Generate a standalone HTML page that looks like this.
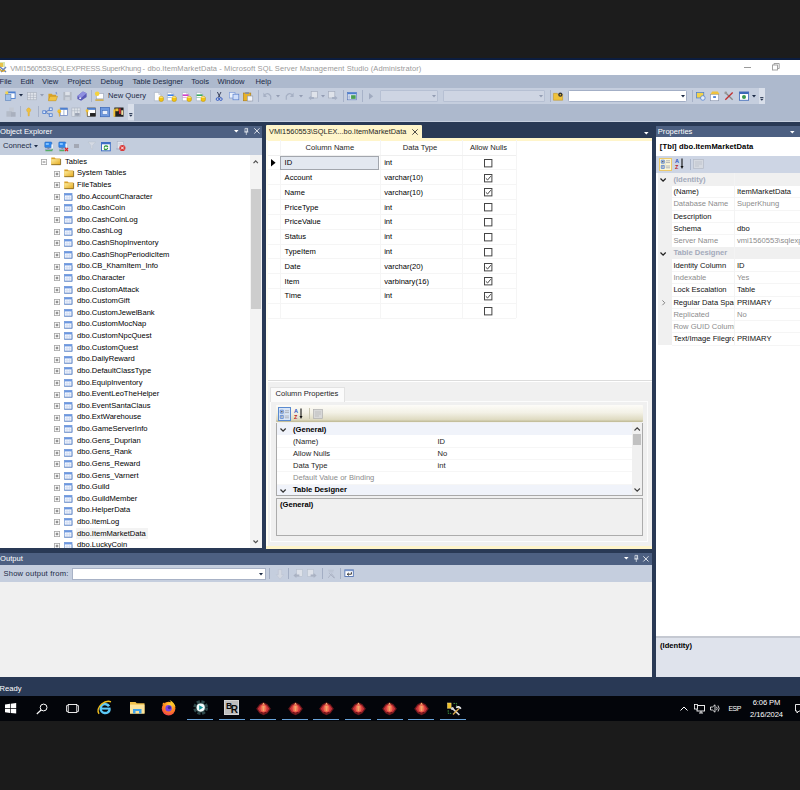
<!DOCTYPE html>
<html><head><meta charset="utf-8"><title>SSMS</title>
<style>
html,body{margin:0;padding:0;background:#1c1c1c;}
body{width:800px;height:790px;position:relative;overflow:hidden;font-family:"Liberation Sans",sans-serif;font-size:7.6px;}
div,span.t,svg{position:absolute;box-sizing:border-box;}
span.t{white-space:nowrap;display:block;}
svg{overflow:visible;}
</style></head><body>
<div style="left:0px;top:0px;width:800px;height:58px;background:#1c1c1c;"></div>
<div style="left:0px;top:58px;width:800px;height:2px;background:#0c1d3f;"></div>
<div style="left:0px;top:60px;width:800px;height:15px;background:#ffffff;"></div>
<div style="left:0px;top:75px;width:800px;height:46.4px;background:#adb9cd;"></div>
<div style="left:0px;top:121.4px;width:800px;height:555.6px;background:#293955;"></div>
<div style="left:0px;top:677px;width:800px;height:19px;background:#293955;"></div>
<div style="left:0px;top:696px;width:800px;height:25.4px;background:#03050a;"></div>
<div style="left:0px;top:721.2px;width:800px;height:69px;background:#1b1b1b;"></div>
<svg width="0" height="0" style="left:0;top:0"><defs><linearGradient id="fg" x1="0" y1="0" x2="1" y2="1"><stop offset="0" stop-color="#fdeea0"/><stop offset="1" stop-color="#e5a81c"/></linearGradient><radialGradient id="ffg" cx="0.6" cy="0.25" r="0.9"><stop offset="0" stop-color="#ffe23a"/><stop offset="0.45" stop-color="#ff8a1e"/><stop offset="1" stop-color="#ee2a5a"/></radialGradient></defs></svg>
<svg style="left:0px;top:61px;" width="8" height="13" viewBox="0 0 8 13"><rect x="0" y="1" width="5" height="5" fill="#d9e6b0"/><rect x="0" y="2" width="3" height="4" fill="#e8c24a"/>
<path d="M0 6 L6 11 M6 6 L1 11" stroke="#6b86b8" stroke-width="1.6" fill="none"/><path d="M0 8 Q2 12 5 9" stroke="#d9a520" stroke-width="1.2" fill="none"/></svg>
<span class="t" style="top:62.6px;color:#9a9a9a;font-size:7.5px;line-height:12px;left:10.3px;letter-spacing:-0.26px;">VMI1560553\SQLEXPRESS.SuperKhung</span>
<span class="t" style="top:62.6px;color:#9a9a9a;font-size:7.5px;line-height:12px;left:142.6px;letter-spacing:0.1px;">- dbo.ItemMarketData - Microsoft SQL Server Management Studio (Administrator)</span>
<div style="left:744px;top:66.5px;width:6.5px;height:1px;background:#9a9a9a;"></div>
<svg style="left:772px;top:63px;" width="8" height="8" viewBox="0 0 8 8"><rect x="0.5" y="2" width="5" height="5" fill="#fff" stroke="#9a9a9a" stroke-width="0.9"/><path d="M2 2 V0.5 H7.2 V5.5 H5.5" fill="none" stroke="#9a9a9a" stroke-width="0.9"/></svg>
<span class="t" style="top:75.6px;color:#1b2a45;font-size:7.6px;line-height:12px;left:-0.5px;">File</span>
<span class="t" style="top:75.6px;color:#1b2a45;font-size:7.6px;line-height:12px;left:20.5px;">Edit</span>
<span class="t" style="top:75.6px;color:#1b2a45;font-size:7.6px;line-height:12px;left:42px;">View</span>
<span class="t" style="top:75.6px;color:#1b2a45;font-size:7.6px;line-height:12px;left:67.5px;">Project</span>
<span class="t" style="top:75.6px;color:#1b2a45;font-size:7.6px;line-height:12px;left:100.5px;">Debug</span>
<span class="t" style="top:75.6px;color:#1b2a45;font-size:7.6px;line-height:12px;left:132.5px;">Table Designer</span>
<span class="t" style="top:75.6px;color:#1b2a45;font-size:7.6px;line-height:12px;left:191.3px;">Tools</span>
<span class="t" style="top:75.6px;color:#1b2a45;font-size:7.6px;line-height:12px;left:217.5px;">Window</span>
<span class="t" style="top:75.6px;color:#1b2a45;font-size:7.6px;line-height:12px;left:255.5px;">Help</span>
<div style="left:0px;top:88px;width:765px;height:16px;background:#c5cede;"></div>
<div style="left:0px;top:104px;width:134px;height:16.5px;background:#c5cede;"></div>
<div style="left:127.5px;top:104px;width:6.5px;height:16.2px;background:#d9dfea;"></div>
<div style="left:758.5px;top:88px;width:6.5px;height:16px;background:#d9dfea;"></div>
<div style="left:0px;top:120.5px;width:800px;height:0.9px;background:#c6cfdf;"></div>
<svg style="left:5px;top:91px;transform:scale(.92);transform-origin:50% 65%;" width="11" height="10" viewBox="0 0 11 10"><rect x="2" y="0" width="9" height="8" fill="#4c7fd0"/><rect x="3" y="2" width="7" height="5" fill="#fff"/><rect x="0" y="3" width="6" height="7" fill="#9fc0ea" stroke="#5b7fb5" stroke-width="0.6"/><rect x="0" y="0" width="3" height="3" fill="#f2d24a"/></svg>
<svg style="left:18.6px;top:94.4px;" width="4" height="2.4" viewBox="0 0 4 2.4"><path d="M0 0 H4 L2 2.4 Z" fill="#1b2a45"/></svg>
<svg style="left:27px;top:91px;transform:scale(.92);transform-origin:50% 65%;" width="10" height="10" viewBox="0 0 10 10"><rect x="0" y="1" width="10" height="8" fill="#dfe3ea" stroke="#a9b0bd" stroke-width="0.7"/><path d="M0 4 H10 M0 6.5 H10 M3.3 1 V9 M6.6 1 V9" stroke="#a9b0bd" stroke-width="0.6"/></svg>
<svg style="left:40px;top:94.4px;" width="4" height="2.4" viewBox="0 0 4 2.4"><path d="M0 0 H4 L2 2.4 Z" fill="#939db3"/></svg>
<svg style="left:48.3px;top:92px;transform:scale(.92);transform-origin:50% 65%;" width="10" height="9.4" viewBox="0 0 10 9.4"><path d="M0 1.5 H3.6 L4.6 2.5 H8.4 V8.6 H0 Z" fill="#d9a428"/><path d="M1.6 4.2 H10 L8.2 9 H0 Z" fill="#f0c244" stroke="#b88a1c" stroke-width="0.5"/><path d="M7.4 0.2 L9.6 1.4 M8.8 -0.6 V2" stroke="#6f8fd0" stroke-width="0.7"/></svg>
<svg style="left:63px;top:91px;transform:scale(.92);transform-origin:50% 65%;" width="9" height="10" viewBox="0 0 9 10"><rect x="0" y="0.5" width="9" height="9" fill="#b3b9c4"/><rect x="2" y="0.5" width="5" height="3.5" fill="#dde1e8"/><rect x="2" y="6" width="5" height="3.5" fill="#ccd1da"/></svg>
<svg style="left:77px;top:91px;transform:scale(.92);transform-origin:50% 65%;" width="10" height="10" viewBox="0 0 10 10"><path d="M0 5 L6 0 L10 2 L10 6 L4 10 L0 8 Z" fill="#5b5bb8"/><path d="M0 5 L6 0 L10 2 L4 7 Z" fill="#8f8fe0"/><rect x="2" y="6.5" width="2" height="1.5" fill="#fff"/></svg>
<div style="left:91px;top:90px;width:1px;height:12px;background:#a7b2c8;"></div>
<svg style="left:94px;top:91px;transform:scale(.92);transform-origin:50% 65%;" width="10" height="10" viewBox="0 0 10 10"><rect x="2" y="2" width="8" height="6" fill="#fff" stroke="#8a95ad" stroke-width="0.6"/><circle cx="3" cy="2.5" r="2.5" fill="#f4d23c"/><rect x="1" y="8.6" width="9" height="1.4" fill="#d6a520"/></svg>
<span class="t" style="top:90.2px;color:#1b2a45;font-size:7.6px;line-height:12px;left:108px;">New Query</span>
<svg style="left:153.5px;top:91.8px;" width="9.8" height="9.6" viewBox="0 0 9.8 9.6"><path d="M0.4 0.4 H4.8 L6.8 2.4 V8.8 H0.4 Z" fill="#fdfdfd" stroke="#a3acc0" stroke-width="0.6"/><path d="M4.8 0.4 V2.4 H6.8" fill="#e4e8f0" stroke="#a3acc0" stroke-width="0.5"/><rect x="5" y="4.4" width="4.4" height="5" rx="1.6" fill="#f2c412" stroke="#b88c0c" stroke-width="0.5"/><ellipse cx="7.2" cy="5.2" rx="1.9" ry="0.8" fill="#fbe27a"/></svg>
<svg style="left:167.3px;top:91.8px;" width="9.8" height="9.6" viewBox="0 0 9.8 9.6"><path d="M0.4 0.4 H4.8 L6.8 2.4 V8.8 H0.4 Z" fill="#fdfdfd" stroke="#a3acc0" stroke-width="0.6"/><path d="M4.8 0.4 V2.4 H6.8" fill="#e4e8f0" stroke="#a3acc0" stroke-width="0.5"/><rect x="0.6" y="2.4" width="6" height="1.6" fill="#3f7fe0"/><rect x="0.6" y="5" width="4" height="1" fill="#3f7fe0" opacity="0.45"/><rect x="5" y="4.4" width="4.4" height="5" rx="1.6" fill="#f2c412" stroke="#b88c0c" stroke-width="0.5"/><ellipse cx="7.2" cy="5.2" rx="1.9" ry="0.8" fill="#fbe27a"/></svg>
<svg style="left:181.6px;top:91.8px;" width="9.8" height="9.6" viewBox="0 0 9.8 9.6"><path d="M0.4 0.4 H4.8 L6.8 2.4 V8.8 H0.4 Z" fill="#fdfdfd" stroke="#a3acc0" stroke-width="0.6"/><path d="M4.8 0.4 V2.4 H6.8" fill="#e4e8f0" stroke="#a3acc0" stroke-width="0.5"/><rect x="0.6" y="2.4" width="6" height="1.6" fill="#d040c8"/><rect x="0.6" y="5" width="4" height="1" fill="#d040c8" opacity="0.45"/><rect x="5" y="4.4" width="4.4" height="5" rx="1.6" fill="#f2c412" stroke="#b88c0c" stroke-width="0.5"/><ellipse cx="7.2" cy="5.2" rx="1.9" ry="0.8" fill="#fbe27a"/></svg>
<svg style="left:195.8px;top:91.8px;" width="9.8" height="9.6" viewBox="0 0 9.8 9.6"><path d="M0.4 0.4 H4.8 L6.8 2.4 V8.8 H0.4 Z" fill="#fdfdfd" stroke="#a3acc0" stroke-width="0.6"/><path d="M4.8 0.4 V2.4 H6.8" fill="#e4e8f0" stroke="#a3acc0" stroke-width="0.5"/><rect x="0.6" y="2.4" width="6" height="1.6" fill="#3aa860"/><rect x="0.6" y="5" width="4" height="1" fill="#3aa860" opacity="0.45"/><rect x="5" y="4.4" width="4.4" height="5" rx="1.6" fill="#f2c412" stroke="#b88c0c" stroke-width="0.5"/><ellipse cx="7.2" cy="5.2" rx="1.9" ry="0.8" fill="#fbe27a"/></svg>
<div style="left:210px;top:90px;width:1px;height:12px;background:#a7b2c8;"></div>
<svg style="left:216px;top:91.8px;" width="6.4" height="9" viewBox="0 0 6.4 9"><path d="M1.4 0 L4.2 5.6 M5 0 L2.2 5.6" stroke="#2a3350" stroke-width="0.9"/><circle cx="1.6" cy="7.1" r="1.4" fill="none" stroke="#3a5fc4" stroke-width="1"/><circle cx="4.8" cy="7.1" r="1.4" fill="none" stroke="#3a5fc4" stroke-width="1"/></svg>
<svg style="left:228.5px;top:92.2px;" width="10.4" height="8" viewBox="0 0 10.4 8"><rect x="0.4" y="0.4" width="5.6" height="5.6" fill="#e9f0fc" stroke="#7f9cd8" stroke-width="0.7"/><rect x="4" y="2.2" width="5.8" height="5.6" fill="#cfdefa" stroke="#5a80cc" stroke-width="0.7"/></svg>
<svg style="left:243px;top:91.8px;" width="10.2" height="9" viewBox="0 0 10.2 9"><rect x="0.4" y="1" width="7.4" height="7.8" fill="#e8b228" stroke="#a87a14" stroke-width="0.6"/><rect x="2.2" y="0.2" width="3.8" height="1.8" fill="#8a8f9c"/><rect x="4.4" y="4" width="5.4" height="5" fill="#f2f4f8" stroke="#8f98ac" stroke-width="0.6"/></svg>
<div style="left:258px;top:90px;width:1px;height:12px;background:#a7b2c8;"></div>
<svg style="left:262.5px;top:92px;transform:scale(.92);transform-origin:50% 65%;" width="9" height="8" viewBox="0 0 9 8"><path d="M1 3 Q5 -1 8 4 L8 8" fill="none" stroke="#a6b0c4" stroke-width="1.3"/><path d="M0 0 V5 H4 Z" fill="#a6b0c4"/></svg>
<svg style="left:276px;top:94.6px;" width="4" height="2.4" viewBox="0 0 4 2.4"><path d="M0 0 H4 L2 2.4 Z" fill="#939db3"/></svg>
<svg style="left:285px;top:92px;transform:scale(.92);transform-origin:50% 65%;" width="9" height="8" viewBox="0 0 9 8"><path d="M8 3 Q4 -1 1 4 L1 8" fill="none" stroke="#a6b0c4" stroke-width="1.3"/><path d="M9 0 V5 H5 Z" fill="#a6b0c4"/></svg>
<svg style="left:298.7px;top:94.6px;" width="4" height="2.4" viewBox="0 0 4 2.4"><path d="M0 0 H4 L2 2.4 Z" fill="#939db3"/></svg>
<svg style="left:307.5px;top:91px;transform:scale(.92);transform-origin:50% 65%;" width="10" height="10" viewBox="0 0 10 10"><rect x="3" y="0" width="7" height="7" fill="#dfe3ea" stroke="#a3abbb" stroke-width="0.7"/><path d="M0 7 L3 4.5 V6 H6 V8 H3 V9.5 Z" fill="#a6b0c4"/></svg>
<svg style="left:320.5px;top:94.6px;" width="4" height="2.4" viewBox="0 0 4 2.4"><path d="M0 0 H4 L2 2.4 Z" fill="#939db3"/></svg>
<svg style="left:328px;top:91px;transform:scale(.92);transform-origin:50% 65%;" width="10" height="10" viewBox="0 0 10 10"><rect x="0" y="0" width="7" height="7" fill="#dfe3ea" stroke="#a3abbb" stroke-width="0.7"/><path d="M10 7 L7 4.5 V6 H4 V8 H7 V9.5 Z" fill="#a6b0c4"/></svg>
<div style="left:342.5px;top:90px;width:1px;height:12px;background:#a7b2c8;"></div>
<svg style="left:347px;top:91px;transform:scale(.92);transform-origin:50% 65%;" width="10" height="10" viewBox="0 0 10 10"><rect x="0" y="1" width="10" height="8" fill="#e6ecf6" stroke="#5a78b8" stroke-width="0.7"/><rect x="0" y="1" width="10" height="2" fill="#4c7fd0"/><rect x="4" y="4" width="5" height="4" fill="#4aa050"/><path d="M1 5 H3 M1 7 H3" stroke="#5a78b8" stroke-width="0.7"/></svg>
<div style="left:362px;top:90px;width:1px;height:12px;background:#a7b2c8;"></div>
<svg style="left:369px;top:92.8px;" width="4.4" height="6.6" viewBox="0 0 4.4 6.6"><path d="M0 0 L4.2 3.3 L0 6.6 Z" fill="#a0aabf"/></svg>
<div style="left:380px;top:90px;width:57.5px;height:12px;background:#ced5e3;border:1px solid #b6c0d3;border-radius:1px;"></div>
<svg style="left:431.5px;top:95.3px;" width="4" height="2.4" viewBox="0 0 4 2.4"><path d="M0 0 H4 L2 2.4 Z" fill="#939db3"/></svg>
<div style="left:442.5px;top:90px;width:102px;height:12px;background:#ced5e3;border:1px solid #b6c0d3;border-radius:1px;"></div>
<svg style="left:539px;top:95.3px;" width="4" height="2.4" viewBox="0 0 4 2.4"><path d="M0 0 H4 L2 2.4 Z" fill="#939db3"/></svg>
<div style="left:549.5px;top:90px;width:1px;height:12px;background:#a7b2c8;"></div>
<svg style="left:553px;top:91px;transform:scale(.92);transform-origin:50% 65%;" width="11" height="10" viewBox="0 0 11 10"><path d="M0 2 H4 L5 3 H10 V9.5 H0 Z" fill="#efc23c" stroke="#b98a18" stroke-width="0.5"/><circle cx="7.5" cy="3.5" r="2.3" fill="#333"/><circle cx="7.5" cy="3.5" r="0.9" fill="#efc23c"/></svg>
<div style="left:568px;top:90px;width:119px;height:12px;background:#ffffff;border:1px solid #a3afc6;border-radius:1.5px;"></div>
<svg style="left:681px;top:95.3px;" width="4" height="2.4" viewBox="0 0 4 2.4"><path d="M0 0 H4 L2 2.4 Z" fill="#1b2a45"/></svg>
<div style="left:691.7px;top:90px;width:1px;height:12px;background:#a7b2c8;"></div>
<svg style="left:696px;top:91px;transform:scale(.92);transform-origin:50% 65%;" width="10" height="10" viewBox="0 0 10 10"><rect x="0" y="1" width="8" height="6" fill="#f2d24a" stroke="#4c7fd0" stroke-width="0.8"/><circle cx="7" cy="7" r="2.5" fill="#e6ecf6" stroke="#4c7fd0" stroke-width="0.8"/></svg>
<svg style="left:710px;top:91px;transform:scale(.92);transform-origin:50% 65%;" width="10" height="10" viewBox="0 0 10 10"><rect x="0" y="3" width="9" height="7" fill="#fff" stroke="#8a95ad" stroke-width="0.7"/><path d="M2 0 H8 L10 3 H0 Z" fill="#efc23c"/><rect x="3" y="5" width="3" height="2" fill="#4c7fd0"/></svg>
<svg style="left:724px;top:91px;transform:scale(.92);transform-origin:50% 65%;" width="10" height="10" viewBox="0 0 10 10"><path d="M1 1 L9 9" stroke="#888" stroke-width="1.4"/><path d="M9 1 L1 9" stroke="#c03030" stroke-width="1.4"/><circle cx="1.5" cy="1.5" r="1.5" fill="#999"/></svg>
<svg style="left:739px;top:91px;transform:scale(.92);transform-origin:50% 65%;" width="10" height="10" viewBox="0 0 10 10"><rect x="0" y="0.5" width="10" height="9" fill="#fff" stroke="#3c68b8" stroke-width="0.9"/><rect x="0" y="0.5" width="10" height="2.2" fill="#3c68b8"/><circle cx="5" cy="6" r="2.2" fill="#3a9a50"/></svg>
<svg style="left:751.7px;top:95.3px;" width="4" height="2.4" viewBox="0 0 4 2.4"><path d="M0 0 H4 L2 2.4 Z" fill="#1b2a45"/></svg>
<svg style="left:760.2px;top:97.2px;" width="3.6" height="4" viewBox="0 0 3.6 4"><rect x="0.2" y="0" width="3.2" height="0.9" fill="#26344f"/><path d="M0 1.8 H3.6 L1.8 3.8 Z" fill="#26344f"/></svg>
<svg style="left:6px;top:106.5px;transform:scale(.92);transform-origin:50% 65%;" width="10" height="10" viewBox="0 0 10 10"><rect x="3" y="0" width="5" height="6" fill="#c3c9d4"/><rect x="0" y="4" width="6" height="6" fill="#b4bbc8"/><rect x="5" y="5" width="5" height="5" fill="#a9b0be"/></svg>
<div style="left:19.5px;top:106px;width:1px;height:11px;background:#a7b2c8;"></div>
<svg style="left:26px;top:107px;transform:scale(.92);transform-origin:50% 65%;" width="5.4" height="9.5" viewBox="0 0 5.4 9.5"><path d="M0.3 2.4 Q2.7 -1.6 5.1 2.4 Q5 4 3.6 5.2 L3.3 9.3 H2.1 L1.8 5.2 Q0.4 4 0.3 2.4 Z" fill="#efc040" stroke="#d9a228" stroke-width="0.4"/></svg>
<div style="left:38px;top:106px;width:1px;height:11px;background:#a7b2c8;"></div>
<svg style="left:42px;top:106.5px;transform:scale(.92);transform-origin:50% 65%;" width="11" height="10" viewBox="0 0 11 10"><path d="M3 5 L9 1.8 M3 5 L9 8.2" stroke="#3c68b8" stroke-width="0.8"/><rect x="0.4" y="3.6" width="3.2" height="2.8" fill="#dce8fb" stroke="#3f72cc" stroke-width="0.8"/><rect x="7.4" y="0.4" width="3.2" height="2.8" fill="#dce8fb" stroke="#3f72cc" stroke-width="0.8"/><rect x="7.4" y="6.8" width="3.2" height="2.8" fill="#dce8fb" stroke="#3f72cc" stroke-width="0.8"/></svg>
<svg style="left:57px;top:106.5px;transform:scale(.92);transform-origin:50% 65%;" width="11" height="10" viewBox="0 0 11 10"><rect x="3" y="0.5" width="8" height="8" fill="#fff" stroke="#5a78b8" stroke-width="0.7"/><rect x="3" y="0.5" width="8" height="2" fill="#4c7fd0"/><path d="M7 2.5 V8.5" stroke="#5a78b8" stroke-width="0.6"/><circle cx="2" cy="4" r="2" fill="#f0c030"/><path d="M1.3 5 H2.7 L2.3 10 H1.7 Z" fill="#e0a820"/></svg>
<svg style="left:71px;top:106.5px;transform:scale(.92);transform-origin:50% 65%;" width="10" height="10" viewBox="0 0 10 10"><rect x="0.5" y="0.5" width="9" height="9" fill="#dfe3ea" stroke="#aab2c0" stroke-width="0.7"/><path d="M0.5 3.5 H9.5 M3.5 0.5 V9.5 M6.5 0.5 V9.5" stroke="#aab2c0" stroke-width="0.6"/><rect x="4" y="6" width="5" height="3" fill="#9aa2b2"/></svg>
<svg style="left:85px;top:106.5px;transform:scale(.92);transform-origin:50% 65%;" width="11" height="10" viewBox="0 0 11 10"><rect x="2" y="0.5" width="9" height="9" fill="#fff" stroke="#333" stroke-width="0.7"/><rect x="2" y="0.5" width="9" height="2" fill="#4c7fd0"/><rect x="5" y="6" width="6" height="3.5" fill="#222"/><circle cx="1.8" cy="3.5" r="1.6" fill="#f0c030"/><path d="M1.2 4.5 H2.4 L2.1 9 H1.5 Z" fill="#e0a820"/></svg>
<svg style="left:100px;top:106.5px;transform:scale(.92);transform-origin:50% 65%;" width="10" height="10" viewBox="0 0 10 10"><rect x="0" y="0" width="10" height="10" fill="#6f9ae0" stroke="#3c68b8" stroke-width="0.8"/><rect x="2" y="3.5" width="6" height="4" fill="#e8eefa" stroke="#3c68b8" stroke-width="0.5"/></svg>
<svg style="left:113px;top:106.5px;transform:scale(.92);transform-origin:50% 65%;" width="11" height="10" viewBox="0 0 11 10"><rect x="1" y="0" width="10" height="10" fill="#222"/><rect x="2" y="1" width="3.5" height="3" fill="#f0c030"/><rect x="6" y="1" width="2" height="6" fill="#d03030"/><rect x="8.5" y="3" width="2" height="5" fill="#f0e0a0"/><rect x="0" y="2" width="2" height="8" fill="#f0c030"/></svg>
<svg style="left:128.9px;top:112.9px;" width="3.6" height="4" viewBox="0 0 3.6 4"><rect x="0.2" y="0" width="3.2" height="0.9" fill="#26344f"/><path d="M0 1.8 H3.6 L1.8 3.8 Z" fill="#26344f"/></svg>
<div style="left:0px;top:125.5px;width:262.2px;height:12px;background:#4d6082;"></div>
<span class="t" style="top:125.6px;color:#ffffff;font-size:7.6px;line-height:12px;left:0px;">Object Explorer</span>
<svg style="left:234.3px;top:130.2px;" width="4.6" height="2.6" viewBox="0 0 4.6 2.6"><path d="M0 0 H4.6 L2.3 2.6 Z" fill="#fff"/></svg>
<svg style="left:244.1px;top:127.9px;" width="4.6" height="7.2" viewBox="0 0 4.6 7.2"><path d="M1 0.4 H3.6 V3.8 H1 Z M0.2 4 H4.4 M2.3 4 V7" fill="none" stroke="#e9edf4" stroke-width="0.7"/><path d="M3.1 0.4 V3.8" stroke="#e9edf4" stroke-width="0.8"/></svg>
<svg style="left:253.6px;top:128.3px;" width="5.8" height="5.8" viewBox="0 0 5.8 5.8"><path d="M0.3 0.3 L5.5 5.5 M5.5 0.3 L0.3 5.5" stroke="#eef1f6" stroke-width="0.9"/></svg>
<div style="left:0px;top:137.5px;width:262.2px;height:17.3px;background:#c3cddd;"></div>
<span class="t" style="top:140px;color:#1b2a45;font-size:7.6px;line-height:12px;left:3px;">Connect</span>
<svg style="left:33.5px;top:145.3px;" width="4" height="2.4" viewBox="0 0 4 2.4"><path d="M0 0 H4 L2 2.4 Z" fill="#1b2a45"/></svg>
<svg style="left:43.6px;top:141.5px;" width="9.8" height="9.2" viewBox="0 0 9.8 9.2"><rect x="0.8" y="0" width="7" height="5.6" rx="0.8" fill="#2f86ea" stroke="#1c5fb8" stroke-width="0.5"/><rect x="1.8" y="1" width="3" height="2" fill="#7fc0ff"/><rect x="3.4" y="5.6" width="2" height="1.2" fill="#6c7f9c"/><rect x="1" y="6.8" width="6.8" height="1" fill="#8ea0bc"/><rect x="1.4" y="8.2" width="7" height="1" fill="#3aa648"/><rect x="7.4" y="2.4" width="1.6" height="4.4" fill="#eef3fa"/><path d="M8.2 6.8 V8.2" stroke="#3aa648" stroke-width="0.9"/></svg>
<svg style="left:57.7px;top:141.5px;" width="10.2" height="9.4" viewBox="0 0 10.2 9.4"><rect x="0.8" y="0" width="7" height="5.6" rx="0.8" fill="#2f86ea" stroke="#1c5fb8" stroke-width="0.5"/><rect x="1.8" y="1" width="3" height="2" fill="#7fc0ff"/><rect x="3.4" y="5.6" width="2" height="1.2" fill="#6c7f9c"/><rect x="1" y="6.8" width="5.6" height="1" fill="#8ea0bc"/><rect x="1.4" y="8.2" width="5" height="1" fill="#3aa648"/><rect x="7.4" y="1.6" width="1.6" height="3.6" fill="#eef3fa"/><path d="M7 6 L10 9.2 M10 6 L7 9.2" stroke="#e02020" stroke-width="1.2"/></svg>
<div style="left:74.2px;top:144.1px;width:5.2px;height:4.2px;background:#a3a8b4;"></div>
<svg style="left:88px;top:142.4px;" width="7.6" height="7.2" viewBox="0 0 7.6 7.2"><path d="M0 0 H7.6 L4.6 3.4 V7.2 L3 6.4 V3.4 Z" fill="#d5dae4" stroke="#b3bac8" stroke-width="0.4"/></svg>
<svg style="left:100.8px;top:141.5px;" width="9.8" height="9.3" viewBox="0 0 9.8 9.3"><rect x="0.5" y="0.5" width="8.8" height="8.3" fill="#fff" stroke="#3f6fc4" stroke-width="1"/><rect x="0.5" y="0.5" width="8.8" height="1.8" fill="#3f6fc4"/><path d="M3.2 5.6 A1.9 1.9 0 0 1 6.6 4.6 M6.7 5.8 A1.9 1.9 0 0 1 3.3 6.8" fill="none" stroke="#2f9a3c" stroke-width="1.2"/><path d="M6 3.4 L7.6 4.8 L5.6 5.2 Z M4 8 L2.4 6.6 L4.4 6.2 Z" fill="#2f9a3c"/></svg>
<svg style="left:115.6px;top:141px;" width="9.8" height="10.2" viewBox="0 0 9.8 10.2"><rect x="1.2" y="0.4" width="6" height="7.8" fill="#e4e8f0" stroke="#a9b3c6" stroke-width="0.6"/><path d="M2.4 2.4 H6 M2.4 4 H6" stroke="#b9c1d0" stroke-width="0.6"/><rect x="0" y="7.4" width="5" height="1" fill="#a9b3c6"/><circle cx="6.4" cy="7" r="3.1" fill="#d83a3a"/><path d="M5 5.6 L7.8 8.4 M7.8 5.6 L5 8.4" stroke="#fff" stroke-width="0.9"/></svg>
<div style="left:0px;top:154.8px;width:262.2px;height:393.6px;background:#ffffff;overflow:hidden;"></div>
<div style="left:250.4px;top:154.8px;width:11.8px;height:394.2px;background:#f3f3f3;"></div>
<div style="left:251.4px;top:189px;width:9.4px;height:120px;background:#cdcdcd;"></div>
<svg style="left:253.3px;top:159.8px;" width="5.4" height="3.6" viewBox="0 0 5.4 3.6"><path d="M0.5 3.1 L2.7 0.9 L4.9 3.1" fill="none" stroke="#505050" stroke-width="1.2"/></svg>
<svg style="left:253.3px;top:539.9px;" width="5.4" height="3.6" viewBox="0 0 5.4 3.6"><path d="M0.5 0.5 L2.7 2.7 L4.9 0.5" fill="none" stroke="#505050" stroke-width="1.2"/></svg>
<svg style="left:40.9px;top:159.4px;" width="6" height="6" viewBox="0 0 6 6"><rect x="0.4" y="0.4" width="5.2" height="5.2" fill="#fdfdfd" stroke="#a6a6a6" stroke-width="0.8"/><path d="M1.6 3 H4.4" stroke="#555" stroke-width="0.8"/></svg>
<svg style="left:51.2px;top:157.4px;" width="10" height="8" viewBox="0 0 10 8"><path d="M0.3 0.4 H3.6 L4.6 1.5 H9.4 V7.7 H0.3 Z" fill="#d9a12a"/><rect x="0.3" y="2.2" width="9.1" height="5.5" fill="url(#fg)"/><path d="M0.3 7.7 H9.6 V2" fill="none" stroke="#6e5312" stroke-width="0.7"/></svg>
<span class="t" style="top:155.7px;color:#000;font-size:7.6px;line-height:12px;left:65px;">Tables</span>
<svg style="left:53.6px;top:170.725px;" width="6" height="6" viewBox="0 0 6 6"><rect x="0.4" y="0.4" width="5.2" height="5.2" fill="#fdfdfd" stroke="#a6a6a6" stroke-width="0.8"/><path d="M1.6 3 H4.4" stroke="#555" stroke-width="0.8"/><path d="M3 1.6 V4.4" stroke="#555" stroke-width="0.8"/></svg>
<svg style="left:63.5px;top:168.925px;" width="10" height="8" viewBox="0 0 10 8"><path d="M0.3 0.4 H3.6 L4.6 1.5 H9.4 V7.7 H0.3 Z" fill="#d9a12a"/><rect x="0.3" y="2.2" width="9.1" height="5.5" fill="url(#fg)"/><path d="M0.3 7.7 H9.6 V2" fill="none" stroke="#6e5312" stroke-width="0.7"/></svg>
<span class="t" style="top:167.325px;color:#000;font-size:7.6px;line-height:12px;left:77px;">System Tables</span>
<svg style="left:53.6px;top:182.35px;" width="6" height="6" viewBox="0 0 6 6"><rect x="0.4" y="0.4" width="5.2" height="5.2" fill="#fdfdfd" stroke="#a6a6a6" stroke-width="0.8"/><path d="M1.6 3 H4.4" stroke="#555" stroke-width="0.8"/><path d="M3 1.6 V4.4" stroke="#555" stroke-width="0.8"/></svg>
<svg style="left:63.5px;top:180.55px;" width="10" height="8" viewBox="0 0 10 8"><path d="M0.3 0.4 H3.6 L4.6 1.5 H9.4 V7.7 H0.3 Z" fill="#d9a12a"/><rect x="0.3" y="2.2" width="9.1" height="5.5" fill="url(#fg)"/><path d="M0.3 7.7 H9.6 V2" fill="none" stroke="#6e5312" stroke-width="0.7"/></svg>
<span class="t" style="top:178.95px;color:#000;font-size:7.6px;line-height:12px;left:77px;">FileTables</span>
<svg style="left:53.6px;top:193.975px;" width="6" height="6" viewBox="0 0 6 6"><rect x="0.4" y="0.4" width="5.2" height="5.2" fill="#fdfdfd" stroke="#a6a6a6" stroke-width="0.8"/><path d="M1.6 3 H4.4" stroke="#555" stroke-width="0.8"/><path d="M3 1.6 V4.4" stroke="#555" stroke-width="0.8"/></svg>
<svg style="left:64.3px;top:192.775px;" width="8.4" height="7.6" viewBox="0 0 8.4 7.6"><rect x="0.4" y="0.4" width="7.6" height="6.8" fill="#f4f7fd" stroke="#7d9fd6" stroke-width="0.8"/><rect x="0.4" y="0.4" width="7.6" height="2" fill="#6b97e0"/><path d="M0.4 4.8 H8 M3 2.5 V7.2 M5.4 2.5 V7.2" stroke="#c3d3ee" stroke-width="0.6"/><path d="M0.4 7.3 H8.1 V2.4" fill="none" stroke="#5a7fc0" stroke-width="0.6"/></svg>
<span class="t" style="top:190.575px;color:#000;font-size:7.6px;line-height:12px;left:77px;">dbo.AccountCharacter</span>
<svg style="left:53.6px;top:205.6px;" width="6" height="6" viewBox="0 0 6 6"><rect x="0.4" y="0.4" width="5.2" height="5.2" fill="#fdfdfd" stroke="#a6a6a6" stroke-width="0.8"/><path d="M1.6 3 H4.4" stroke="#555" stroke-width="0.8"/><path d="M3 1.6 V4.4" stroke="#555" stroke-width="0.8"/></svg>
<svg style="left:64.3px;top:204.4px;" width="8.4" height="7.6" viewBox="0 0 8.4 7.6"><rect x="0.4" y="0.4" width="7.6" height="6.8" fill="#f4f7fd" stroke="#7d9fd6" stroke-width="0.8"/><rect x="0.4" y="0.4" width="7.6" height="2" fill="#6b97e0"/><path d="M0.4 4.8 H8 M3 2.5 V7.2 M5.4 2.5 V7.2" stroke="#c3d3ee" stroke-width="0.6"/><path d="M0.4 7.3 H8.1 V2.4" fill="none" stroke="#5a7fc0" stroke-width="0.6"/></svg>
<span class="t" style="top:202.2px;color:#000;font-size:7.6px;line-height:12px;left:77px;">dbo.CashCoin</span>
<svg style="left:53.6px;top:217.225px;" width="6" height="6" viewBox="0 0 6 6"><rect x="0.4" y="0.4" width="5.2" height="5.2" fill="#fdfdfd" stroke="#a6a6a6" stroke-width="0.8"/><path d="M1.6 3 H4.4" stroke="#555" stroke-width="0.8"/><path d="M3 1.6 V4.4" stroke="#555" stroke-width="0.8"/></svg>
<svg style="left:64.3px;top:216.025px;" width="8.4" height="7.6" viewBox="0 0 8.4 7.6"><rect x="0.4" y="0.4" width="7.6" height="6.8" fill="#f4f7fd" stroke="#7d9fd6" stroke-width="0.8"/><rect x="0.4" y="0.4" width="7.6" height="2" fill="#6b97e0"/><path d="M0.4 4.8 H8 M3 2.5 V7.2 M5.4 2.5 V7.2" stroke="#c3d3ee" stroke-width="0.6"/><path d="M0.4 7.3 H8.1 V2.4" fill="none" stroke="#5a7fc0" stroke-width="0.6"/></svg>
<span class="t" style="top:213.825px;color:#000;font-size:7.6px;line-height:12px;left:77px;">dbo.CashCoinLog</span>
<svg style="left:53.6px;top:228.85px;" width="6" height="6" viewBox="0 0 6 6"><rect x="0.4" y="0.4" width="5.2" height="5.2" fill="#fdfdfd" stroke="#a6a6a6" stroke-width="0.8"/><path d="M1.6 3 H4.4" stroke="#555" stroke-width="0.8"/><path d="M3 1.6 V4.4" stroke="#555" stroke-width="0.8"/></svg>
<svg style="left:64.3px;top:227.65px;" width="8.4" height="7.6" viewBox="0 0 8.4 7.6"><rect x="0.4" y="0.4" width="7.6" height="6.8" fill="#f4f7fd" stroke="#7d9fd6" stroke-width="0.8"/><rect x="0.4" y="0.4" width="7.6" height="2" fill="#6b97e0"/><path d="M0.4 4.8 H8 M3 2.5 V7.2 M5.4 2.5 V7.2" stroke="#c3d3ee" stroke-width="0.6"/><path d="M0.4 7.3 H8.1 V2.4" fill="none" stroke="#5a7fc0" stroke-width="0.6"/></svg>
<span class="t" style="top:225.45px;color:#000;font-size:7.6px;line-height:12px;left:77px;">dbo.CashLog</span>
<svg style="left:53.6px;top:240.475px;" width="6" height="6" viewBox="0 0 6 6"><rect x="0.4" y="0.4" width="5.2" height="5.2" fill="#fdfdfd" stroke="#a6a6a6" stroke-width="0.8"/><path d="M1.6 3 H4.4" stroke="#555" stroke-width="0.8"/><path d="M3 1.6 V4.4" stroke="#555" stroke-width="0.8"/></svg>
<svg style="left:64.3px;top:239.275px;" width="8.4" height="7.6" viewBox="0 0 8.4 7.6"><rect x="0.4" y="0.4" width="7.6" height="6.8" fill="#f4f7fd" stroke="#7d9fd6" stroke-width="0.8"/><rect x="0.4" y="0.4" width="7.6" height="2" fill="#6b97e0"/><path d="M0.4 4.8 H8 M3 2.5 V7.2 M5.4 2.5 V7.2" stroke="#c3d3ee" stroke-width="0.6"/><path d="M0.4 7.3 H8.1 V2.4" fill="none" stroke="#5a7fc0" stroke-width="0.6"/></svg>
<span class="t" style="top:237.075px;color:#000;font-size:7.6px;line-height:12px;left:77px;">dbo.CashShopInventory</span>
<svg style="left:53.6px;top:252.1px;" width="6" height="6" viewBox="0 0 6 6"><rect x="0.4" y="0.4" width="5.2" height="5.2" fill="#fdfdfd" stroke="#a6a6a6" stroke-width="0.8"/><path d="M1.6 3 H4.4" stroke="#555" stroke-width="0.8"/><path d="M3 1.6 V4.4" stroke="#555" stroke-width="0.8"/></svg>
<svg style="left:64.3px;top:250.9px;" width="8.4" height="7.6" viewBox="0 0 8.4 7.6"><rect x="0.4" y="0.4" width="7.6" height="6.8" fill="#f4f7fd" stroke="#7d9fd6" stroke-width="0.8"/><rect x="0.4" y="0.4" width="7.6" height="2" fill="#6b97e0"/><path d="M0.4 4.8 H8 M3 2.5 V7.2 M5.4 2.5 V7.2" stroke="#c3d3ee" stroke-width="0.6"/><path d="M0.4 7.3 H8.1 V2.4" fill="none" stroke="#5a7fc0" stroke-width="0.6"/></svg>
<span class="t" style="top:248.7px;color:#000;font-size:7.6px;line-height:12px;left:77px;">dbo.CashShopPeriodicItem</span>
<svg style="left:53.6px;top:263.725px;" width="6" height="6" viewBox="0 0 6 6"><rect x="0.4" y="0.4" width="5.2" height="5.2" fill="#fdfdfd" stroke="#a6a6a6" stroke-width="0.8"/><path d="M1.6 3 H4.4" stroke="#555" stroke-width="0.8"/><path d="M3 1.6 V4.4" stroke="#555" stroke-width="0.8"/></svg>
<svg style="left:64.3px;top:262.525px;" width="8.4" height="7.6" viewBox="0 0 8.4 7.6"><rect x="0.4" y="0.4" width="7.6" height="6.8" fill="#f4f7fd" stroke="#7d9fd6" stroke-width="0.8"/><rect x="0.4" y="0.4" width="7.6" height="2" fill="#6b97e0"/><path d="M0.4 4.8 H8 M3 2.5 V7.2 M5.4 2.5 V7.2" stroke="#c3d3ee" stroke-width="0.6"/><path d="M0.4 7.3 H8.1 V2.4" fill="none" stroke="#5a7fc0" stroke-width="0.6"/></svg>
<span class="t" style="top:260.325px;color:#000;font-size:7.6px;line-height:12px;left:77px;">dbo.CB_KhamItem_Info</span>
<svg style="left:53.6px;top:275.35px;" width="6" height="6" viewBox="0 0 6 6"><rect x="0.4" y="0.4" width="5.2" height="5.2" fill="#fdfdfd" stroke="#a6a6a6" stroke-width="0.8"/><path d="M1.6 3 H4.4" stroke="#555" stroke-width="0.8"/><path d="M3 1.6 V4.4" stroke="#555" stroke-width="0.8"/></svg>
<svg style="left:64.3px;top:274.15px;" width="8.4" height="7.6" viewBox="0 0 8.4 7.6"><rect x="0.4" y="0.4" width="7.6" height="6.8" fill="#f4f7fd" stroke="#7d9fd6" stroke-width="0.8"/><rect x="0.4" y="0.4" width="7.6" height="2" fill="#6b97e0"/><path d="M0.4 4.8 H8 M3 2.5 V7.2 M5.4 2.5 V7.2" stroke="#c3d3ee" stroke-width="0.6"/><path d="M0.4 7.3 H8.1 V2.4" fill="none" stroke="#5a7fc0" stroke-width="0.6"/></svg>
<span class="t" style="top:271.95px;color:#000;font-size:7.6px;line-height:12px;left:77px;">dbo.Character</span>
<svg style="left:53.6px;top:286.975px;" width="6" height="6" viewBox="0 0 6 6"><rect x="0.4" y="0.4" width="5.2" height="5.2" fill="#fdfdfd" stroke="#a6a6a6" stroke-width="0.8"/><path d="M1.6 3 H4.4" stroke="#555" stroke-width="0.8"/><path d="M3 1.6 V4.4" stroke="#555" stroke-width="0.8"/></svg>
<svg style="left:64.3px;top:285.775px;" width="8.4" height="7.6" viewBox="0 0 8.4 7.6"><rect x="0.4" y="0.4" width="7.6" height="6.8" fill="#f4f7fd" stroke="#7d9fd6" stroke-width="0.8"/><rect x="0.4" y="0.4" width="7.6" height="2" fill="#6b97e0"/><path d="M0.4 4.8 H8 M3 2.5 V7.2 M5.4 2.5 V7.2" stroke="#c3d3ee" stroke-width="0.6"/><path d="M0.4 7.3 H8.1 V2.4" fill="none" stroke="#5a7fc0" stroke-width="0.6"/></svg>
<span class="t" style="top:283.575px;color:#000;font-size:7.6px;line-height:12px;left:77px;">dbo.CustomAttack</span>
<svg style="left:53.6px;top:298.6px;" width="6" height="6" viewBox="0 0 6 6"><rect x="0.4" y="0.4" width="5.2" height="5.2" fill="#fdfdfd" stroke="#a6a6a6" stroke-width="0.8"/><path d="M1.6 3 H4.4" stroke="#555" stroke-width="0.8"/><path d="M3 1.6 V4.4" stroke="#555" stroke-width="0.8"/></svg>
<svg style="left:64.3px;top:297.4px;" width="8.4" height="7.6" viewBox="0 0 8.4 7.6"><rect x="0.4" y="0.4" width="7.6" height="6.8" fill="#f4f7fd" stroke="#7d9fd6" stroke-width="0.8"/><rect x="0.4" y="0.4" width="7.6" height="2" fill="#6b97e0"/><path d="M0.4 4.8 H8 M3 2.5 V7.2 M5.4 2.5 V7.2" stroke="#c3d3ee" stroke-width="0.6"/><path d="M0.4 7.3 H8.1 V2.4" fill="none" stroke="#5a7fc0" stroke-width="0.6"/></svg>
<span class="t" style="top:295.2px;color:#000;font-size:7.6px;line-height:12px;left:77px;">dbo.CustomGift</span>
<svg style="left:53.6px;top:310.225px;" width="6" height="6" viewBox="0 0 6 6"><rect x="0.4" y="0.4" width="5.2" height="5.2" fill="#fdfdfd" stroke="#a6a6a6" stroke-width="0.8"/><path d="M1.6 3 H4.4" stroke="#555" stroke-width="0.8"/><path d="M3 1.6 V4.4" stroke="#555" stroke-width="0.8"/></svg>
<svg style="left:64.3px;top:309.025px;" width="8.4" height="7.6" viewBox="0 0 8.4 7.6"><rect x="0.4" y="0.4" width="7.6" height="6.8" fill="#f4f7fd" stroke="#7d9fd6" stroke-width="0.8"/><rect x="0.4" y="0.4" width="7.6" height="2" fill="#6b97e0"/><path d="M0.4 4.8 H8 M3 2.5 V7.2 M5.4 2.5 V7.2" stroke="#c3d3ee" stroke-width="0.6"/><path d="M0.4 7.3 H8.1 V2.4" fill="none" stroke="#5a7fc0" stroke-width="0.6"/></svg>
<span class="t" style="top:306.825px;color:#000;font-size:7.6px;line-height:12px;left:77px;">dbo.CustomJewelBank</span>
<svg style="left:53.6px;top:321.85px;" width="6" height="6" viewBox="0 0 6 6"><rect x="0.4" y="0.4" width="5.2" height="5.2" fill="#fdfdfd" stroke="#a6a6a6" stroke-width="0.8"/><path d="M1.6 3 H4.4" stroke="#555" stroke-width="0.8"/><path d="M3 1.6 V4.4" stroke="#555" stroke-width="0.8"/></svg>
<svg style="left:64.3px;top:320.65px;" width="8.4" height="7.6" viewBox="0 0 8.4 7.6"><rect x="0.4" y="0.4" width="7.6" height="6.8" fill="#f4f7fd" stroke="#7d9fd6" stroke-width="0.8"/><rect x="0.4" y="0.4" width="7.6" height="2" fill="#6b97e0"/><path d="M0.4 4.8 H8 M3 2.5 V7.2 M5.4 2.5 V7.2" stroke="#c3d3ee" stroke-width="0.6"/><path d="M0.4 7.3 H8.1 V2.4" fill="none" stroke="#5a7fc0" stroke-width="0.6"/></svg>
<span class="t" style="top:318.45px;color:#000;font-size:7.6px;line-height:12px;left:77px;">dbo.CustomMocNap</span>
<svg style="left:53.6px;top:333.475px;" width="6" height="6" viewBox="0 0 6 6"><rect x="0.4" y="0.4" width="5.2" height="5.2" fill="#fdfdfd" stroke="#a6a6a6" stroke-width="0.8"/><path d="M1.6 3 H4.4" stroke="#555" stroke-width="0.8"/><path d="M3 1.6 V4.4" stroke="#555" stroke-width="0.8"/></svg>
<svg style="left:64.3px;top:332.275px;" width="8.4" height="7.6" viewBox="0 0 8.4 7.6"><rect x="0.4" y="0.4" width="7.6" height="6.8" fill="#f4f7fd" stroke="#7d9fd6" stroke-width="0.8"/><rect x="0.4" y="0.4" width="7.6" height="2" fill="#6b97e0"/><path d="M0.4 4.8 H8 M3 2.5 V7.2 M5.4 2.5 V7.2" stroke="#c3d3ee" stroke-width="0.6"/><path d="M0.4 7.3 H8.1 V2.4" fill="none" stroke="#5a7fc0" stroke-width="0.6"/></svg>
<span class="t" style="top:330.075px;color:#000;font-size:7.6px;line-height:12px;left:77px;">dbo.CustomNpcQuest</span>
<svg style="left:53.6px;top:345.1px;" width="6" height="6" viewBox="0 0 6 6"><rect x="0.4" y="0.4" width="5.2" height="5.2" fill="#fdfdfd" stroke="#a6a6a6" stroke-width="0.8"/><path d="M1.6 3 H4.4" stroke="#555" stroke-width="0.8"/><path d="M3 1.6 V4.4" stroke="#555" stroke-width="0.8"/></svg>
<svg style="left:64.3px;top:343.9px;" width="8.4" height="7.6" viewBox="0 0 8.4 7.6"><rect x="0.4" y="0.4" width="7.6" height="6.8" fill="#f4f7fd" stroke="#7d9fd6" stroke-width="0.8"/><rect x="0.4" y="0.4" width="7.6" height="2" fill="#6b97e0"/><path d="M0.4 4.8 H8 M3 2.5 V7.2 M5.4 2.5 V7.2" stroke="#c3d3ee" stroke-width="0.6"/><path d="M0.4 7.3 H8.1 V2.4" fill="none" stroke="#5a7fc0" stroke-width="0.6"/></svg>
<span class="t" style="top:341.7px;color:#000;font-size:7.6px;line-height:12px;left:77px;">dbo.CustomQuest</span>
<svg style="left:53.6px;top:356.725px;" width="6" height="6" viewBox="0 0 6 6"><rect x="0.4" y="0.4" width="5.2" height="5.2" fill="#fdfdfd" stroke="#a6a6a6" stroke-width="0.8"/><path d="M1.6 3 H4.4" stroke="#555" stroke-width="0.8"/><path d="M3 1.6 V4.4" stroke="#555" stroke-width="0.8"/></svg>
<svg style="left:64.3px;top:355.525px;" width="8.4" height="7.6" viewBox="0 0 8.4 7.6"><rect x="0.4" y="0.4" width="7.6" height="6.8" fill="#f4f7fd" stroke="#7d9fd6" stroke-width="0.8"/><rect x="0.4" y="0.4" width="7.6" height="2" fill="#6b97e0"/><path d="M0.4 4.8 H8 M3 2.5 V7.2 M5.4 2.5 V7.2" stroke="#c3d3ee" stroke-width="0.6"/><path d="M0.4 7.3 H8.1 V2.4" fill="none" stroke="#5a7fc0" stroke-width="0.6"/></svg>
<span class="t" style="top:353.325px;color:#000;font-size:7.6px;line-height:12px;left:77px;">dbo.DailyReward</span>
<svg style="left:53.6px;top:368.35px;" width="6" height="6" viewBox="0 0 6 6"><rect x="0.4" y="0.4" width="5.2" height="5.2" fill="#fdfdfd" stroke="#a6a6a6" stroke-width="0.8"/><path d="M1.6 3 H4.4" stroke="#555" stroke-width="0.8"/><path d="M3 1.6 V4.4" stroke="#555" stroke-width="0.8"/></svg>
<svg style="left:64.3px;top:367.15px;" width="8.4" height="7.6" viewBox="0 0 8.4 7.6"><rect x="0.4" y="0.4" width="7.6" height="6.8" fill="#f4f7fd" stroke="#7d9fd6" stroke-width="0.8"/><rect x="0.4" y="0.4" width="7.6" height="2" fill="#6b97e0"/><path d="M0.4 4.8 H8 M3 2.5 V7.2 M5.4 2.5 V7.2" stroke="#c3d3ee" stroke-width="0.6"/><path d="M0.4 7.3 H8.1 V2.4" fill="none" stroke="#5a7fc0" stroke-width="0.6"/></svg>
<span class="t" style="top:364.95px;color:#000;font-size:7.6px;line-height:12px;left:77px;">dbo.DefaultClassType</span>
<svg style="left:53.6px;top:379.975px;" width="6" height="6" viewBox="0 0 6 6"><rect x="0.4" y="0.4" width="5.2" height="5.2" fill="#fdfdfd" stroke="#a6a6a6" stroke-width="0.8"/><path d="M1.6 3 H4.4" stroke="#555" stroke-width="0.8"/><path d="M3 1.6 V4.4" stroke="#555" stroke-width="0.8"/></svg>
<svg style="left:64.3px;top:378.775px;" width="8.4" height="7.6" viewBox="0 0 8.4 7.6"><rect x="0.4" y="0.4" width="7.6" height="6.8" fill="#f4f7fd" stroke="#7d9fd6" stroke-width="0.8"/><rect x="0.4" y="0.4" width="7.6" height="2" fill="#6b97e0"/><path d="M0.4 4.8 H8 M3 2.5 V7.2 M5.4 2.5 V7.2" stroke="#c3d3ee" stroke-width="0.6"/><path d="M0.4 7.3 H8.1 V2.4" fill="none" stroke="#5a7fc0" stroke-width="0.6"/></svg>
<span class="t" style="top:376.575px;color:#000;font-size:7.6px;line-height:12px;left:77px;">dbo.EquipInventory</span>
<svg style="left:53.6px;top:391.6px;" width="6" height="6" viewBox="0 0 6 6"><rect x="0.4" y="0.4" width="5.2" height="5.2" fill="#fdfdfd" stroke="#a6a6a6" stroke-width="0.8"/><path d="M1.6 3 H4.4" stroke="#555" stroke-width="0.8"/><path d="M3 1.6 V4.4" stroke="#555" stroke-width="0.8"/></svg>
<svg style="left:64.3px;top:390.4px;" width="8.4" height="7.6" viewBox="0 0 8.4 7.6"><rect x="0.4" y="0.4" width="7.6" height="6.8" fill="#f4f7fd" stroke="#7d9fd6" stroke-width="0.8"/><rect x="0.4" y="0.4" width="7.6" height="2" fill="#6b97e0"/><path d="M0.4 4.8 H8 M3 2.5 V7.2 M5.4 2.5 V7.2" stroke="#c3d3ee" stroke-width="0.6"/><path d="M0.4 7.3 H8.1 V2.4" fill="none" stroke="#5a7fc0" stroke-width="0.6"/></svg>
<span class="t" style="top:388.2px;color:#000;font-size:7.6px;line-height:12px;left:77px;">dbo.EventLeoTheHelper</span>
<svg style="left:53.6px;top:403.225px;" width="6" height="6" viewBox="0 0 6 6"><rect x="0.4" y="0.4" width="5.2" height="5.2" fill="#fdfdfd" stroke="#a6a6a6" stroke-width="0.8"/><path d="M1.6 3 H4.4" stroke="#555" stroke-width="0.8"/><path d="M3 1.6 V4.4" stroke="#555" stroke-width="0.8"/></svg>
<svg style="left:64.3px;top:402.025px;" width="8.4" height="7.6" viewBox="0 0 8.4 7.6"><rect x="0.4" y="0.4" width="7.6" height="6.8" fill="#f4f7fd" stroke="#7d9fd6" stroke-width="0.8"/><rect x="0.4" y="0.4" width="7.6" height="2" fill="#6b97e0"/><path d="M0.4 4.8 H8 M3 2.5 V7.2 M5.4 2.5 V7.2" stroke="#c3d3ee" stroke-width="0.6"/><path d="M0.4 7.3 H8.1 V2.4" fill="none" stroke="#5a7fc0" stroke-width="0.6"/></svg>
<span class="t" style="top:399.825px;color:#000;font-size:7.6px;line-height:12px;left:77px;">dbo.EventSantaClaus</span>
<svg style="left:53.6px;top:414.85px;" width="6" height="6" viewBox="0 0 6 6"><rect x="0.4" y="0.4" width="5.2" height="5.2" fill="#fdfdfd" stroke="#a6a6a6" stroke-width="0.8"/><path d="M1.6 3 H4.4" stroke="#555" stroke-width="0.8"/><path d="M3 1.6 V4.4" stroke="#555" stroke-width="0.8"/></svg>
<svg style="left:64.3px;top:413.65px;" width="8.4" height="7.6" viewBox="0 0 8.4 7.6"><rect x="0.4" y="0.4" width="7.6" height="6.8" fill="#f4f7fd" stroke="#7d9fd6" stroke-width="0.8"/><rect x="0.4" y="0.4" width="7.6" height="2" fill="#6b97e0"/><path d="M0.4 4.8 H8 M3 2.5 V7.2 M5.4 2.5 V7.2" stroke="#c3d3ee" stroke-width="0.6"/><path d="M0.4 7.3 H8.1 V2.4" fill="none" stroke="#5a7fc0" stroke-width="0.6"/></svg>
<span class="t" style="top:411.45px;color:#000;font-size:7.6px;line-height:12px;left:77px;">dbo.ExtWarehouse</span>
<svg style="left:53.6px;top:426.475px;" width="6" height="6" viewBox="0 0 6 6"><rect x="0.4" y="0.4" width="5.2" height="5.2" fill="#fdfdfd" stroke="#a6a6a6" stroke-width="0.8"/><path d="M1.6 3 H4.4" stroke="#555" stroke-width="0.8"/><path d="M3 1.6 V4.4" stroke="#555" stroke-width="0.8"/></svg>
<svg style="left:64.3px;top:425.275px;" width="8.4" height="7.6" viewBox="0 0 8.4 7.6"><rect x="0.4" y="0.4" width="7.6" height="6.8" fill="#f4f7fd" stroke="#7d9fd6" stroke-width="0.8"/><rect x="0.4" y="0.4" width="7.6" height="2" fill="#6b97e0"/><path d="M0.4 4.8 H8 M3 2.5 V7.2 M5.4 2.5 V7.2" stroke="#c3d3ee" stroke-width="0.6"/><path d="M0.4 7.3 H8.1 V2.4" fill="none" stroke="#5a7fc0" stroke-width="0.6"/></svg>
<span class="t" style="top:423.075px;color:#000;font-size:7.6px;line-height:12px;left:77px;">dbo.GameServerInfo</span>
<svg style="left:53.6px;top:438.1px;" width="6" height="6" viewBox="0 0 6 6"><rect x="0.4" y="0.4" width="5.2" height="5.2" fill="#fdfdfd" stroke="#a6a6a6" stroke-width="0.8"/><path d="M1.6 3 H4.4" stroke="#555" stroke-width="0.8"/><path d="M3 1.6 V4.4" stroke="#555" stroke-width="0.8"/></svg>
<svg style="left:64.3px;top:436.9px;" width="8.4" height="7.6" viewBox="0 0 8.4 7.6"><rect x="0.4" y="0.4" width="7.6" height="6.8" fill="#f4f7fd" stroke="#7d9fd6" stroke-width="0.8"/><rect x="0.4" y="0.4" width="7.6" height="2" fill="#6b97e0"/><path d="M0.4 4.8 H8 M3 2.5 V7.2 M5.4 2.5 V7.2" stroke="#c3d3ee" stroke-width="0.6"/><path d="M0.4 7.3 H8.1 V2.4" fill="none" stroke="#5a7fc0" stroke-width="0.6"/></svg>
<span class="t" style="top:434.7px;color:#000;font-size:7.6px;line-height:12px;left:77px;">dbo.Gens_Duprian</span>
<svg style="left:53.6px;top:449.725px;" width="6" height="6" viewBox="0 0 6 6"><rect x="0.4" y="0.4" width="5.2" height="5.2" fill="#fdfdfd" stroke="#a6a6a6" stroke-width="0.8"/><path d="M1.6 3 H4.4" stroke="#555" stroke-width="0.8"/><path d="M3 1.6 V4.4" stroke="#555" stroke-width="0.8"/></svg>
<svg style="left:64.3px;top:448.525px;" width="8.4" height="7.6" viewBox="0 0 8.4 7.6"><rect x="0.4" y="0.4" width="7.6" height="6.8" fill="#f4f7fd" stroke="#7d9fd6" stroke-width="0.8"/><rect x="0.4" y="0.4" width="7.6" height="2" fill="#6b97e0"/><path d="M0.4 4.8 H8 M3 2.5 V7.2 M5.4 2.5 V7.2" stroke="#c3d3ee" stroke-width="0.6"/><path d="M0.4 7.3 H8.1 V2.4" fill="none" stroke="#5a7fc0" stroke-width="0.6"/></svg>
<span class="t" style="top:446.325px;color:#000;font-size:7.6px;line-height:12px;left:77px;">dbo.Gens_Rank</span>
<svg style="left:53.6px;top:461.35px;" width="6" height="6" viewBox="0 0 6 6"><rect x="0.4" y="0.4" width="5.2" height="5.2" fill="#fdfdfd" stroke="#a6a6a6" stroke-width="0.8"/><path d="M1.6 3 H4.4" stroke="#555" stroke-width="0.8"/><path d="M3 1.6 V4.4" stroke="#555" stroke-width="0.8"/></svg>
<svg style="left:64.3px;top:460.15px;" width="8.4" height="7.6" viewBox="0 0 8.4 7.6"><rect x="0.4" y="0.4" width="7.6" height="6.8" fill="#f4f7fd" stroke="#7d9fd6" stroke-width="0.8"/><rect x="0.4" y="0.4" width="7.6" height="2" fill="#6b97e0"/><path d="M0.4 4.8 H8 M3 2.5 V7.2 M5.4 2.5 V7.2" stroke="#c3d3ee" stroke-width="0.6"/><path d="M0.4 7.3 H8.1 V2.4" fill="none" stroke="#5a7fc0" stroke-width="0.6"/></svg>
<span class="t" style="top:457.95px;color:#000;font-size:7.6px;line-height:12px;left:77px;">dbo.Gens_Reward</span>
<svg style="left:53.6px;top:472.975px;" width="6" height="6" viewBox="0 0 6 6"><rect x="0.4" y="0.4" width="5.2" height="5.2" fill="#fdfdfd" stroke="#a6a6a6" stroke-width="0.8"/><path d="M1.6 3 H4.4" stroke="#555" stroke-width="0.8"/><path d="M3 1.6 V4.4" stroke="#555" stroke-width="0.8"/></svg>
<svg style="left:64.3px;top:471.775px;" width="8.4" height="7.6" viewBox="0 0 8.4 7.6"><rect x="0.4" y="0.4" width="7.6" height="6.8" fill="#f4f7fd" stroke="#7d9fd6" stroke-width="0.8"/><rect x="0.4" y="0.4" width="7.6" height="2" fill="#6b97e0"/><path d="M0.4 4.8 H8 M3 2.5 V7.2 M5.4 2.5 V7.2" stroke="#c3d3ee" stroke-width="0.6"/><path d="M0.4 7.3 H8.1 V2.4" fill="none" stroke="#5a7fc0" stroke-width="0.6"/></svg>
<span class="t" style="top:469.575px;color:#000;font-size:7.6px;line-height:12px;left:77px;">dbo.Gens_Varnert</span>
<svg style="left:53.6px;top:484.6px;" width="6" height="6" viewBox="0 0 6 6"><rect x="0.4" y="0.4" width="5.2" height="5.2" fill="#fdfdfd" stroke="#a6a6a6" stroke-width="0.8"/><path d="M1.6 3 H4.4" stroke="#555" stroke-width="0.8"/><path d="M3 1.6 V4.4" stroke="#555" stroke-width="0.8"/></svg>
<svg style="left:64.3px;top:483.4px;" width="8.4" height="7.6" viewBox="0 0 8.4 7.6"><rect x="0.4" y="0.4" width="7.6" height="6.8" fill="#f4f7fd" stroke="#7d9fd6" stroke-width="0.8"/><rect x="0.4" y="0.4" width="7.6" height="2" fill="#6b97e0"/><path d="M0.4 4.8 H8 M3 2.5 V7.2 M5.4 2.5 V7.2" stroke="#c3d3ee" stroke-width="0.6"/><path d="M0.4 7.3 H8.1 V2.4" fill="none" stroke="#5a7fc0" stroke-width="0.6"/></svg>
<span class="t" style="top:481.2px;color:#000;font-size:7.6px;line-height:12px;left:77px;">dbo.Guild</span>
<svg style="left:53.6px;top:496.225px;" width="6" height="6" viewBox="0 0 6 6"><rect x="0.4" y="0.4" width="5.2" height="5.2" fill="#fdfdfd" stroke="#a6a6a6" stroke-width="0.8"/><path d="M1.6 3 H4.4" stroke="#555" stroke-width="0.8"/><path d="M3 1.6 V4.4" stroke="#555" stroke-width="0.8"/></svg>
<svg style="left:64.3px;top:495.025px;" width="8.4" height="7.6" viewBox="0 0 8.4 7.6"><rect x="0.4" y="0.4" width="7.6" height="6.8" fill="#f4f7fd" stroke="#7d9fd6" stroke-width="0.8"/><rect x="0.4" y="0.4" width="7.6" height="2" fill="#6b97e0"/><path d="M0.4 4.8 H8 M3 2.5 V7.2 M5.4 2.5 V7.2" stroke="#c3d3ee" stroke-width="0.6"/><path d="M0.4 7.3 H8.1 V2.4" fill="none" stroke="#5a7fc0" stroke-width="0.6"/></svg>
<span class="t" style="top:492.825px;color:#000;font-size:7.6px;line-height:12px;left:77px;">dbo.GuildMember</span>
<svg style="left:53.6px;top:507.85px;" width="6" height="6" viewBox="0 0 6 6"><rect x="0.4" y="0.4" width="5.2" height="5.2" fill="#fdfdfd" stroke="#a6a6a6" stroke-width="0.8"/><path d="M1.6 3 H4.4" stroke="#555" stroke-width="0.8"/><path d="M3 1.6 V4.4" stroke="#555" stroke-width="0.8"/></svg>
<svg style="left:64.3px;top:506.65px;" width="8.4" height="7.6" viewBox="0 0 8.4 7.6"><rect x="0.4" y="0.4" width="7.6" height="6.8" fill="#f4f7fd" stroke="#7d9fd6" stroke-width="0.8"/><rect x="0.4" y="0.4" width="7.6" height="2" fill="#6b97e0"/><path d="M0.4 4.8 H8 M3 2.5 V7.2 M5.4 2.5 V7.2" stroke="#c3d3ee" stroke-width="0.6"/><path d="M0.4 7.3 H8.1 V2.4" fill="none" stroke="#5a7fc0" stroke-width="0.6"/></svg>
<span class="t" style="top:504.45px;color:#000;font-size:7.6px;line-height:12px;left:77px;">dbo.HelperData</span>
<svg style="left:53.6px;top:519.475px;" width="6" height="6" viewBox="0 0 6 6"><rect x="0.4" y="0.4" width="5.2" height="5.2" fill="#fdfdfd" stroke="#a6a6a6" stroke-width="0.8"/><path d="M1.6 3 H4.4" stroke="#555" stroke-width="0.8"/><path d="M3 1.6 V4.4" stroke="#555" stroke-width="0.8"/></svg>
<svg style="left:64.3px;top:518.275px;" width="8.4" height="7.6" viewBox="0 0 8.4 7.6"><rect x="0.4" y="0.4" width="7.6" height="6.8" fill="#f4f7fd" stroke="#7d9fd6" stroke-width="0.8"/><rect x="0.4" y="0.4" width="7.6" height="2" fill="#6b97e0"/><path d="M0.4 4.8 H8 M3 2.5 V7.2 M5.4 2.5 V7.2" stroke="#c3d3ee" stroke-width="0.6"/><path d="M0.4 7.3 H8.1 V2.4" fill="none" stroke="#5a7fc0" stroke-width="0.6"/></svg>
<span class="t" style="top:516.075px;color:#000;font-size:7.6px;line-height:12px;left:77px;">dbo.ItemLog</span>
<svg style="left:53.6px;top:531.1px;" width="6" height="6" viewBox="0 0 6 6"><rect x="0.4" y="0.4" width="5.2" height="5.2" fill="#fdfdfd" stroke="#a6a6a6" stroke-width="0.8"/><path d="M1.6 3 H4.4" stroke="#555" stroke-width="0.8"/><path d="M3 1.6 V4.4" stroke="#555" stroke-width="0.8"/></svg>
<svg style="left:64.3px;top:529.9px;" width="8.4" height="7.6" viewBox="0 0 8.4 7.6"><rect x="0.4" y="0.4" width="7.6" height="6.8" fill="#f4f7fd" stroke="#7d9fd6" stroke-width="0.8"/><rect x="0.4" y="0.4" width="7.6" height="2" fill="#6b97e0"/><path d="M0.4 4.8 H8 M3 2.5 V7.2 M5.4 2.5 V7.2" stroke="#c3d3ee" stroke-width="0.6"/><path d="M0.4 7.3 H8.1 V2.4" fill="none" stroke="#5a7fc0" stroke-width="0.6"/></svg>
<div style="left:75.8px;top:528.1px;width:72.5px;height:11.2px;background:#f3f3f3;"></div>
<span class="t" style="top:527.7px;color:#000;font-size:7.6px;line-height:12px;left:77px;">dbo.ItemMarketData</span>
<svg style="left:53.6px;top:542.725px;" width="6" height="6" viewBox="0 0 6 6"><rect x="0.4" y="0.4" width="5.2" height="5.2" fill="#fdfdfd" stroke="#a6a6a6" stroke-width="0.8"/><path d="M1.6 3 H4.4" stroke="#555" stroke-width="0.8"/><path d="M3 1.6 V4.4" stroke="#555" stroke-width="0.8"/></svg>
<svg style="left:64.3px;top:541.525px;" width="8.4" height="7.6" viewBox="0 0 8.4 7.6"><rect x="0.4" y="0.4" width="7.6" height="6.8" fill="#f4f7fd" stroke="#7d9fd6" stroke-width="0.8"/><rect x="0.4" y="0.4" width="7.6" height="2" fill="#6b97e0"/><path d="M0.4 4.8 H8 M3 2.5 V7.2 M5.4 2.5 V7.2" stroke="#c3d3ee" stroke-width="0.6"/><path d="M0.4 7.3 H8.1 V2.4" fill="none" stroke="#5a7fc0" stroke-width="0.6"/></svg>
<span class="t" style="top:539.325px;color:#000;font-size:7.6px;line-height:12px;left:77px;">dbo.LuckyCoin</span>
<div style="left:0px;top:548.4px;width:262.2px;height:4.1px;background:#293955;"></div>
<div style="left:266px;top:125.4px;width:156px;height:13.2px;background:#fff5ca;border-radius:1px 1px 0 0;"></div>
<span class="t" style="top:125.8px;color:#1e1e1e;font-size:7.38px;line-height:12px;left:269px;">VMI1560553\SQLEX...bo.ItemMarketData</span>
<svg style="left:412.3px;top:129px;" width="6" height="6" viewBox="0 0 6 6"><path d="M0.3 0.3 L5.7 5.7 M5.7 0.3 L0.3 5.7" stroke="#3a3a3a" stroke-width="0.9"/></svg>
<svg style="left:643.7px;top:131.8px;" width="4.6" height="2.6" viewBox="0 0 4.6 2.6"><path d="M0 0 H4.6 L2.3 2.6 Z" fill="#fff"/></svg>
<div style="left:266px;top:138.2px;width:386.4px;height:2.6px;background:#fff5ca;"></div>
<div style="left:266px;top:140.7px;width:386.4px;height:408.1px;background:#ffffff;"></div>
<div style="left:266px;top:140px;width:1.5px;height:409px;background:#fffdf2;"></div>
<div style="left:266px;top:546.2px;width:386.4px;height:2.6px;background:#fff5ca;"></div>
<div style="left:279.6px;top:140px;width:0.9px;height:178.12px;background:#f5f5f5;"></div>
<div style="left:379.8px;top:140px;width:0.9px;height:178.12px;background:#f5f5f5;"></div>
<div style="left:461.5px;top:140px;width:0.9px;height:178.12px;background:#f5f5f5;"></div>
<div style="left:515.5px;top:140px;width:0.9px;height:178.12px;background:#f5f5f5;"></div>
<div style="left:267.5px;top:154.6px;width:248.5px;height:0.9px;background:#efefef;"></div>
<div style="left:267.5px;top:169.42px;width:248.5px;height:0.9px;background:#f5f5f5;"></div>
<div style="left:267.5px;top:184.24px;width:248.5px;height:0.9px;background:#f5f5f5;"></div>
<div style="left:267.5px;top:199.06px;width:248.5px;height:0.9px;background:#f5f5f5;"></div>
<div style="left:267.5px;top:213.88px;width:248.5px;height:0.9px;background:#f5f5f5;"></div>
<div style="left:267.5px;top:228.7px;width:248.5px;height:0.9px;background:#f5f5f5;"></div>
<div style="left:267.5px;top:243.52px;width:248.5px;height:0.9px;background:#f5f5f5;"></div>
<div style="left:267.5px;top:258.34px;width:248.5px;height:0.9px;background:#f5f5f5;"></div>
<div style="left:267.5px;top:273.16px;width:248.5px;height:0.9px;background:#f5f5f5;"></div>
<div style="left:267.5px;top:287.98px;width:248.5px;height:0.9px;background:#f5f5f5;"></div>
<div style="left:267.5px;top:302.8px;width:248.5px;height:0.9px;background:#f5f5f5;"></div>
<div style="left:267.5px;top:317.62px;width:248.5px;height:0.9px;background:#f5f5f5;"></div>
<span class="t" style="top:141.7px;color:#1e1e1e;font-size:7.6px;line-height:12px;left:229.9px;width:200px;text-align:center;">Column Name</span>
<span class="t" style="top:141.7px;color:#1e1e1e;font-size:7.6px;line-height:12px;left:320px;width:200px;text-align:center;">Data Type</span>
<span class="t" style="top:141.7px;color:#1e1e1e;font-size:7.6px;line-height:12px;left:388.5px;width:200px;text-align:center;">Allow Nulls</span>
<div style="left:280.3px;top:155.6px;width:99.2px;height:14.8px;background:#e3e8f0;border:1px solid #a2a6ad;"></div>
<svg style="left:270.7px;top:158.8px;" width="4.6" height="7.4" viewBox="0 0 4.6 7.4"><path d="M0 0 L4.6 3.7 L0 7.4 Z" fill="#000"/></svg>
<span class="t" style="top:157.11px;color:#000;font-size:7.6px;line-height:12px;left:284.6px;">ID</span>
<span class="t" style="top:157.11px;color:#000;font-size:7.6px;line-height:12px;left:384.2px;">int</span>
<svg style="left:483.9px;top:158.81px;" width="8.4" height="8.4" viewBox="0 0 8.4 8.4"><rect x="0.5" y="0.5" width="7.4" height="7.4" fill="#fff" stroke="#454545" stroke-width="1"/></svg>
<span class="t" style="top:171.93px;color:#000;font-size:7.6px;line-height:12px;left:284.6px;">Account</span>
<span class="t" style="top:171.93px;color:#000;font-size:7.6px;line-height:12px;left:384.2px;">varchar(10)</span>
<svg style="left:483.9px;top:173.63px;" width="8.4" height="8.4" viewBox="0 0 8.4 8.4"><rect x="0.5" y="0.5" width="7.4" height="7.4" fill="#fff" stroke="#454545" stroke-width="1"/><path d="M1.8 4.3 L3.6 6 L6.8 2.2" fill="none" stroke="#454545" stroke-width="1"/></svg>
<span class="t" style="top:186.75px;color:#000;font-size:7.6px;line-height:12px;left:284.6px;">Name</span>
<span class="t" style="top:186.75px;color:#000;font-size:7.6px;line-height:12px;left:384.2px;">varchar(10)</span>
<svg style="left:483.9px;top:188.45px;" width="8.4" height="8.4" viewBox="0 0 8.4 8.4"><rect x="0.5" y="0.5" width="7.4" height="7.4" fill="#fff" stroke="#454545" stroke-width="1"/><path d="M1.8 4.3 L3.6 6 L6.8 2.2" fill="none" stroke="#454545" stroke-width="1"/></svg>
<span class="t" style="top:201.57px;color:#000;font-size:7.6px;line-height:12px;left:284.6px;">PriceType</span>
<span class="t" style="top:201.57px;color:#000;font-size:7.6px;line-height:12px;left:384.2px;">int</span>
<svg style="left:483.9px;top:203.27px;" width="8.4" height="8.4" viewBox="0 0 8.4 8.4"><rect x="0.5" y="0.5" width="7.4" height="7.4" fill="#fff" stroke="#454545" stroke-width="1"/></svg>
<span class="t" style="top:216.39px;color:#000;font-size:7.6px;line-height:12px;left:284.6px;">PriceValue</span>
<span class="t" style="top:216.39px;color:#000;font-size:7.6px;line-height:12px;left:384.2px;">int</span>
<svg style="left:483.9px;top:218.09px;" width="8.4" height="8.4" viewBox="0 0 8.4 8.4"><rect x="0.5" y="0.5" width="7.4" height="7.4" fill="#fff" stroke="#454545" stroke-width="1"/></svg>
<span class="t" style="top:231.21px;color:#000;font-size:7.6px;line-height:12px;left:284.6px;">Status</span>
<span class="t" style="top:231.21px;color:#000;font-size:7.6px;line-height:12px;left:384.2px;">int</span>
<svg style="left:483.9px;top:232.91px;" width="8.4" height="8.4" viewBox="0 0 8.4 8.4"><rect x="0.5" y="0.5" width="7.4" height="7.4" fill="#fff" stroke="#454545" stroke-width="1"/></svg>
<span class="t" style="top:246.03px;color:#000;font-size:7.6px;line-height:12px;left:284.6px;">TypeItem</span>
<span class="t" style="top:246.03px;color:#000;font-size:7.6px;line-height:12px;left:384.2px;">int</span>
<svg style="left:483.9px;top:247.73px;" width="8.4" height="8.4" viewBox="0 0 8.4 8.4"><rect x="0.5" y="0.5" width="7.4" height="7.4" fill="#fff" stroke="#454545" stroke-width="1"/></svg>
<span class="t" style="top:260.85px;color:#000;font-size:7.6px;line-height:12px;left:284.6px;">Date</span>
<span class="t" style="top:260.85px;color:#000;font-size:7.6px;line-height:12px;left:384.2px;">varchar(20)</span>
<svg style="left:483.9px;top:262.55px;" width="8.4" height="8.4" viewBox="0 0 8.4 8.4"><rect x="0.5" y="0.5" width="7.4" height="7.4" fill="#fff" stroke="#454545" stroke-width="1"/><path d="M1.8 4.3 L3.6 6 L6.8 2.2" fill="none" stroke="#454545" stroke-width="1"/></svg>
<span class="t" style="top:275.67px;color:#000;font-size:7.6px;line-height:12px;left:284.6px;">Item</span>
<span class="t" style="top:275.67px;color:#000;font-size:7.6px;line-height:12px;left:384.2px;">varbinary(16)</span>
<svg style="left:483.9px;top:277.37px;" width="8.4" height="8.4" viewBox="0 0 8.4 8.4"><rect x="0.5" y="0.5" width="7.4" height="7.4" fill="#fff" stroke="#454545" stroke-width="1"/><path d="M1.8 4.3 L3.6 6 L6.8 2.2" fill="none" stroke="#454545" stroke-width="1"/></svg>
<span class="t" style="top:290.49px;color:#000;font-size:7.6px;line-height:12px;left:284.6px;">Time</span>
<span class="t" style="top:290.49px;color:#000;font-size:7.6px;line-height:12px;left:384.2px;">int</span>
<svg style="left:483.9px;top:292.19px;" width="8.4" height="8.4" viewBox="0 0 8.4 8.4"><rect x="0.5" y="0.5" width="7.4" height="7.4" fill="#fff" stroke="#454545" stroke-width="1"/><path d="M1.8 4.3 L3.6 6 L6.8 2.2" fill="none" stroke="#454545" stroke-width="1"/></svg>
<svg style="left:483.9px;top:307.01px;" width="8.4" height="8.4" viewBox="0 0 8.4 8.4"><rect x="0.5" y="0.5" width="7.4" height="7.4" fill="#fff" stroke="#454545" stroke-width="1"/></svg>
<div style="left:267.5px;top:380.2px;width:384.9px;height:1.3px;background:#dcdcdc;"></div>
<div style="left:267.5px;top:381.5px;width:384.9px;height:164.7px;background:#f0f0f0;"></div>
<div style="left:270px;top:401px;width:378px;height:141px;border:1px solid #fcfcfc;"></div>
<div style="left:270px;top:386.8px;width:74.5px;height:15px;background:#fbfbfb;border:1px solid #e2e2e2;border-bottom:none;"></div>
<span class="t" style="top:387.8px;color:#1e1e1e;font-size:7.6px;line-height:12px;left:275.5px;">Column Properties</span>
<div style="left:276px;top:405px;width:366.5px;height:16.5px;background:linear-gradient(#fdfcf8 0%,#f3f1e6 45%,#dfdbc2 85%,#bdb893 100%);border-radius:1px;"></div>
<div style="left:277.5px;top:407.3px;width:13.5px;height:13.5px;background:#d9e6f7;border:1px solid #5a8ad0;"></div>
<svg style="left:279.5px;top:409.5px;" width="10" height="9" viewBox="0 0 10 9"><path d="M0.3 0.2 H3.3 V3.2 H0.3 Z M0.3 5.4 H3.3 V8.4 H0.3 Z" fill="#e6effc" stroke="#4a78c8" stroke-width="0.8"/><path d="M1.1 1.7 H2.5 M1.1 6.9 H2.5 M1.8 1 V2.4" stroke="#222" stroke-width="0.6"/><path d="M5 0.8 H9 M5 2.6 H9 M5 6 H9 M5 7.8 H9" stroke="#a9adb6" stroke-width="0.9"/><path d="M4.2 1 V8" stroke="#c5c8cf" stroke-width="0.5"/></svg>
<svg style="left:294px;top:408px;" width="10" height="12" viewBox="0 0 10 12"><text x="0" y="5" font-size="5.5" font-weight="bold" fill="#2a50c0" font-family="Liberation Sans, sans-serif">A</text><text x="0" y="11" font-size="5.5" font-weight="bold" fill="#c02020" font-family="Liberation Sans, sans-serif">Z</text><path d="M7 0.5 V9" stroke="#111" stroke-width="1.1"/><path d="M5.5 8 H8.5 L7 11 Z" fill="#111"/></svg>
<div style="left:308.5px;top:408px;width:1px;height:11px;background:#c9c6b0;"></div>
<svg style="left:312.5px;top:409px;" width="10" height="10" viewBox="0 0 10 10"><rect x="0.5" y="0.5" width="9" height="9" fill="#d8d8d8" stroke="#b0b0b0" stroke-width="0.7"/><path d="M2 3 H8 M2 5 H8 M2 7 H6" stroke="#b8b8b8" stroke-width="0.7"/></svg>
<div style="left:276px;top:422.5px;width:366.5px;height:73px;background:#ffffff;border:1px solid #a9a9a9;"></div>
<div style="left:276.8px;top:423.3px;width:355px;height:12.15px;background:#f0f3fa;"></div>
<div style="left:276.8px;top:484.05px;width:355px;height:10.95px;background:#f0f3fa;"></div>
<div style="left:276.8px;top:447.1px;width:355px;height:0.7px;background:#f6f6f6;"></div>
<div style="left:276.8px;top:459.25px;width:355px;height:0.7px;background:#f6f6f6;"></div>
<div style="left:276.8px;top:471.4px;width:355px;height:0.7px;background:#f6f6f6;"></div>
<div style="left:276.8px;top:483.55px;width:355px;height:0.7px;background:#f6f6f6;"></div>
<svg style="left:279.9px;top:427.975px;" width="6.2" height="3.8" viewBox="0 0 6.2 3.8"><path d="M0.5 0.5 L3.1 3.1 L5.7 0.5" fill="none" stroke="#333" stroke-width="1.3"/></svg>
<span class="t" style="top:423.575px;color:#000;font-size:7.6px;line-height:12px;left:293px;font-weight:bold;">(General)</span>
<span class="t" style="top:435.725px;color:#1e1e1e;font-size:7.6px;line-height:12px;left:293px;">(Name)</span>
<span class="t" style="top:435.725px;color:#1e1e1e;font-size:7.6px;line-height:12px;left:437.5px;">ID</span>
<span class="t" style="top:447.875px;color:#1e1e1e;font-size:7.6px;line-height:12px;left:293px;">Allow Nulls</span>
<span class="t" style="top:447.875px;color:#1e1e1e;font-size:7.6px;line-height:12px;left:437.5px;">No</span>
<span class="t" style="top:460.025px;color:#1e1e1e;font-size:7.6px;line-height:12px;left:293px;">Data Type</span>
<span class="t" style="top:460.025px;color:#1e1e1e;font-size:7.6px;line-height:12px;left:437.5px;">int</span>
<span class="t" style="top:472.175px;color:#8c8c8c;font-size:7.6px;line-height:12px;left:293px;">Default Value or Binding</span>
<svg style="left:279.9px;top:488.525px;" width="6.2" height="3.8" viewBox="0 0 6.2 3.8"><path d="M0.5 0.5 L3.1 3.1 L5.7 0.5" fill="none" stroke="#333" stroke-width="1.3"/></svg>
<span class="t" style="top:484.125px;color:#000;font-size:7.6px;line-height:12px;left:293px;font-weight:bold;">Table Designer</span>
<div style="left:632px;top:423.3px;width:9.7px;height:71.4px;background:#f0f0f0;"></div>
<div style="left:632.6px;top:433.5px;width:8.6px;height:11px;background:#c1c1c1;"></div>
<svg style="left:633.5px;top:426.5px;" width="6.4" height="4" viewBox="0 0 6.4 4"><path d="M0.5 3.5 L3.2 0.8 L5.9 3.5" fill="none" stroke="#404040" stroke-width="1.1"/></svg>
<svg style="left:633.5px;top:487.5px;" width="6.4" height="4" viewBox="0 0 6.4 4"><path d="M0.5 0.5 L3.2 3.2 L5.9 0.5" fill="none" stroke="#404040" stroke-width="1.1"/></svg>
<div style="left:276px;top:498px;width:366.5px;height:37.8px;background:#f0f0f0;border:1px solid #acacac;"></div>
<span class="t" style="top:499px;color:#000;font-size:7.6px;line-height:12px;left:280px;font-weight:bold;">(General)</span>
<div style="left:656.2px;top:125.7px;width:143.8px;height:11.4px;background:#4d6082;"></div>
<span class="t" style="top:125.8px;color:#ffffff;font-size:7.6px;line-height:12px;left:657.8px;">Properties</span>
<svg style="left:789.5px;top:130.6px;" width="4.6" height="2.6" viewBox="0 0 4.6 2.6"><path d="M0 0 H4.6 L2.3 2.6 Z" fill="#fff"/></svg>
<div style="left:656.2px;top:137.1px;width:143.8px;height:539.6px;background:#ffffff;"></div>
<span class="t" style="top:141px;color:#000;font-size:7.6px;line-height:12px;left:659.8px;font-weight:bold;letter-spacing:0.1px;">[Tbl] dbo.ItemMarketData</span>
<div style="left:656.2px;top:155.7px;width:143.8px;height:16.9px;background:#cdd5e4;"></div>
<div style="left:658.6px;top:157.5px;width:13.9px;height:13.6px;background:#fdf7d6;border:1px solid #ecc96a;"></div>
<svg style="left:661px;top:159.5px;" width="10" height="9" viewBox="0 0 10 9"><path d="M0.3 0.2 H3.3 V3.2 H0.3 Z M0.3 5.4 H3.3 V8.4 H0.3 Z" fill="#e6effc" stroke="#4a78c8" stroke-width="0.8"/><path d="M1.1 1.7 H2.5 M1.1 6.9 H2.5 M1.8 1 V2.4" stroke="#222" stroke-width="0.6"/><path d="M5 0.8 H9 M5 2.6 H9 M5 6 H9 M5 7.8 H9" stroke="#a9adb6" stroke-width="0.9"/><path d="M4.2 1 V8" stroke="#c5c8cf" stroke-width="0.5"/></svg>
<svg style="left:675px;top:158px;" width="10" height="12" viewBox="0 0 10 12"><text x="0" y="5" font-size="5.5" font-weight="bold" fill="#2a50c0" font-family="Liberation Sans, sans-serif">A</text><text x="0" y="11" font-size="5.5" font-weight="bold" fill="#c02020" font-family="Liberation Sans, sans-serif">Z</text><path d="M7 0.5 V9" stroke="#111" stroke-width="1.1"/><path d="M5.5 8 H8.5 L7 11 Z" fill="#111"/></svg>
<div style="left:689.5px;top:158.5px;width:1px;height:11px;background:#a9b4c9;"></div>
<svg style="left:693px;top:159px;" width="11" height="10" viewBox="0 0 11 10"><rect x="0.5" y="0.5" width="10" height="9" fill="#d5d9e0" stroke="#b4bac6" stroke-width="0.7"/><path d="M2 3 H9 M2 5 H9 M2 7 H6" stroke="#b8bcc6" stroke-width="0.7"/></svg>
<div style="left:657.5px;top:173.4px;width:14px;height:171.78px;background:#f0f0f0;"></div>
<div style="left:657.5px;top:173.4px;width:143.8px;height:12.27px;background:#f0f0f0;"></div>
<svg style="left:660.2px;top:178.135px;" width="6.2" height="3.8" viewBox="0 0 6.2 3.8"><path d="M0.5 0.5 L3.1 3.1 L5.7 0.5" fill="none" stroke="#222" stroke-width="1.3"/></svg>
<span class="t" style="top:173.835px;color:#a3aabb;font-size:7.6px;line-height:12px;left:673.4px;font-weight:bold;">(Identity)</span>
<div style="left:671.5px;top:197.44px;width:130px;height:0.8px;background:#f5f5f5;"></div>
<span class="t" style="top:186.105px;color:#111;font-size:7.6px;line-height:12px;left:673.4px;width:60.4px;overflow:hidden;">(Name)</span>
<span class="t" style="top:186.105px;color:#111;font-size:7.6px;line-height:12px;left:737px;">ItemMarketData</span>
<div style="left:671.5px;top:209.71px;width:130px;height:0.8px;background:#f5f5f5;"></div>
<span class="t" style="top:198.375px;color:#8c8c8c;font-size:7.6px;line-height:12px;left:673.4px;width:60.4px;overflow:hidden;">Database Name</span>
<span class="t" style="top:198.375px;color:#8c8c8c;font-size:7.6px;line-height:12px;left:737px;">SuperKhung</span>
<div style="left:671.5px;top:221.98px;width:130px;height:0.8px;background:#f5f5f5;"></div>
<span class="t" style="top:210.645px;color:#111;font-size:7.6px;line-height:12px;left:673.4px;width:60.4px;overflow:hidden;">Description</span>
<div style="left:671.5px;top:234.25px;width:130px;height:0.8px;background:#f5f5f5;"></div>
<span class="t" style="top:222.915px;color:#111;font-size:7.6px;line-height:12px;left:673.4px;width:60.4px;overflow:hidden;">Schema</span>
<span class="t" style="top:222.915px;color:#111;font-size:7.6px;line-height:12px;left:737px;">dbo</span>
<div style="left:671.5px;top:246.52px;width:130px;height:0.8px;background:#f5f5f5;"></div>
<span class="t" style="top:235.185px;color:#8c8c8c;font-size:7.6px;line-height:12px;left:673.4px;width:60.4px;overflow:hidden;">Server Name</span>
<span class="t" style="top:235.185px;color:#8c8c8c;font-size:7.6px;line-height:12px;left:737px;">vmi1560553\sqlexp</span>
<div style="left:657.5px;top:247.02px;width:143.8px;height:12.27px;background:#f0f0f0;"></div>
<svg style="left:660.2px;top:251.755px;" width="6.2" height="3.8" viewBox="0 0 6.2 3.8"><path d="M0.5 0.5 L3.1 3.1 L5.7 0.5" fill="none" stroke="#222" stroke-width="1.3"/></svg>
<span class="t" style="top:247.455px;color:#a3aabb;font-size:7.6px;line-height:12px;left:673.4px;font-weight:bold;">Table Designer</span>
<div style="left:671.5px;top:271.06px;width:130px;height:0.8px;background:#f5f5f5;"></div>
<span class="t" style="top:259.725px;color:#111;font-size:7.6px;line-height:12px;left:673.4px;width:60.4px;overflow:hidden;">Identity Column</span>
<span class="t" style="top:259.725px;color:#111;font-size:7.6px;line-height:12px;left:737px;">ID</span>
<div style="left:671.5px;top:283.33px;width:130px;height:0.8px;background:#f5f5f5;"></div>
<span class="t" style="top:271.995px;color:#8c8c8c;font-size:7.6px;line-height:12px;left:673.4px;width:60.4px;overflow:hidden;">Indexable</span>
<span class="t" style="top:271.995px;color:#8c8c8c;font-size:7.6px;line-height:12px;left:737px;">Yes</span>
<div style="left:671.5px;top:295.6px;width:130px;height:0.8px;background:#f5f5f5;"></div>
<span class="t" style="top:284.265px;color:#111;font-size:7.6px;line-height:12px;left:673.4px;width:60.4px;overflow:hidden;">Lock Escalation</span>
<span class="t" style="top:284.265px;color:#111;font-size:7.6px;line-height:12px;left:737px;">Table</span>
<div style="left:671.5px;top:307.87px;width:130px;height:0.8px;background:#f5f5f5;"></div>
<span class="t" style="top:296.535px;color:#111;font-size:7.6px;line-height:12px;left:673.4px;width:60.4px;overflow:hidden;">Regular Data Space Specification</span>
<span class="t" style="top:296.535px;color:#111;font-size:7.6px;line-height:12px;left:737px;">PRIMARY</span>
<svg style="left:661.8px;top:299.735px;" width="3.4" height="5.6" viewBox="0 0 3.4 5.6"><path d="M0.4 0.4 L2.8 2.8 L0.4 5.2" fill="none" stroke="#777" stroke-width="0.9"/></svg>
<div style="left:671.5px;top:320.14px;width:130px;height:0.8px;background:#f5f5f5;"></div>
<span class="t" style="top:308.805px;color:#8c8c8c;font-size:7.6px;line-height:12px;left:673.4px;width:60.4px;overflow:hidden;">Replicated</span>
<span class="t" style="top:308.805px;color:#8c8c8c;font-size:7.6px;line-height:12px;left:737px;">No</span>
<div style="left:671.5px;top:332.41px;width:130px;height:0.8px;background:#f5f5f5;"></div>
<span class="t" style="top:321.075px;color:#8c8c8c;font-size:7.6px;line-height:12px;left:673.4px;width:60.4px;overflow:hidden;">Row GUID Column</span>
<div style="left:671.5px;top:344.68px;width:130px;height:0.8px;background:#f5f5f5;"></div>
<span class="t" style="top:333.345px;color:#111;font-size:7.6px;line-height:12px;left:673.4px;width:60.4px;overflow:hidden;">Text/Image Filegroup</span>
<span class="t" style="top:333.345px;color:#111;font-size:7.6px;line-height:12px;left:737px;">PRIMARY</span>
<div style="left:734px;top:173.4px;width:0.8px;height:171.78px;background:#f3f3f3;"></div>
<div style="left:656.2px;top:636px;width:143.8px;height:2px;background:#c5c9d2;"></div>
<div style="left:656.2px;top:638px;width:143.8px;height:38.7px;background:#dfe3ec;"></div>
<span class="t" style="top:639.6px;color:#000;font-size:7.6px;line-height:12px;left:660px;font-weight:bold;">(Identity)</span>
<div style="left:0px;top:552.5px;width:652.3px;height:12px;background:#4d6082;"></div>
<span class="t" style="top:552.8px;color:#ffffff;font-size:7.6px;line-height:12px;left:0px;">Output</span>
<svg style="left:623.7px;top:557.4px;" width="4.6" height="2.6" viewBox="0 0 4.6 2.6"><path d="M0 0 H4.6 L2.3 2.6 Z" fill="#fff"/></svg>
<svg style="left:633.9px;top:555.1px;" width="4.6" height="7.2" viewBox="0 0 4.6 7.2"><path d="M1 0.4 H3.6 V3.8 H1 Z M0.2 4 H4.4 M2.3 4 V7" fill="none" stroke="#e9edf4" stroke-width="0.7"/><path d="M3.1 0.4 V3.8" stroke="#e9edf4" stroke-width="0.8"/></svg>
<svg style="left:643.4px;top:555.5px;" width="5.8" height="5.8" viewBox="0 0 5.8 5.8"><path d="M0.3 0.3 L5.5 5.5 M5.5 0.3 L0.3 5.5" stroke="#eef1f6" stroke-width="0.9"/></svg>
<div style="left:0px;top:564.5px;width:652.3px;height:17.5px;background:#c5cede;"></div>
<span class="t" style="top:568px;color:#1b2a45;font-size:7.6px;line-height:12px;left:3.5px;letter-spacing:0.2px;">Show output from:</span>
<div style="left:72px;top:568px;width:193.5px;height:11.6px;background:#ffffff;border:1px solid #a8b2c6;"></div>
<svg style="left:259px;top:573px;" width="4" height="2.4" viewBox="0 0 4 2.4"><path d="M0 0 H4 L2 2.4 Z" fill="#1b2a45"/></svg>
<div style="left:269.3px;top:568px;width:1px;height:11px;background:#a3aec4;"></div>
<svg style="left:275.5px;top:568.5px;transform:scale(.92);transform-origin:50% 65%;" width="8" height="11" viewBox="0 0 8 11"><path d="M2.2 0 H5.8 V5.5 H8 L4 10.5 L0 5.5 H2.2 Z" fill="#d3d8e2" stroke="#b9c0ce" stroke-width="0.5"/></svg>
<div style="left:288.3px;top:568px;width:1px;height:11px;background:#a3aec4;"></div>
<svg style="left:292.5px;top:569px;transform:scale(.92);transform-origin:50% 65%;" width="10" height="10" viewBox="0 0 10 10"><rect x="3.5" y="0" width="6.5" height="7.5" fill="#dde1e9" stroke="#b4bccb" stroke-width="0.6"/><path d="M0 6.5 L3.2 3.8 V5.4 H6.5 V7.6 H3.2 V9.2 Z" fill="#aab2c3"/></svg>
<svg style="left:307px;top:569px;transform:scale(.92);transform-origin:50% 65%;" width="10" height="10" viewBox="0 0 10 10"><rect x="0" y="0" width="6.5" height="7.5" fill="#dde1e9" stroke="#b4bccb" stroke-width="0.6"/><path d="M10 6.5 L6.8 3.8 V5.4 H3.5 V7.6 H6.8 V9.2 Z" fill="#aab2c3"/></svg>
<div style="left:321.7px;top:568px;width:1px;height:11px;background:#a3aec4;"></div>
<svg style="left:326.5px;top:569px;transform:scale(.92);transform-origin:50% 65%;" width="9" height="10" viewBox="0 0 9 10"><path d="M1 0.8 H7 M1.5 2.6 H6.5" stroke="#b4bccb" stroke-width="0.8"/><path d="M1 9 L4.5 4.5 L8 9 M2 4 L7.5 9.5" stroke="#aab2c3" stroke-width="1" fill="none"/></svg>
<div style="left:340.4px;top:568px;width:1px;height:11px;background:#a3aec4;"></div>
<svg style="left:344.4px;top:569.2px;transform:scale(.92);transform-origin:50% 65%;" width="10.2" height="8.2" viewBox="0 0 10.2 8.2"><rect x="0.5" y="0.5" width="9.2" height="7.2" fill="#fff" stroke="#5676b4" stroke-width="1"/><rect x="0.5" y="0.5" width="9.2" height="1.4" fill="#7a96cc"/><path d="M7.6 3 V5.2 H3.2 M4.8 3.8 L3.2 5.2 L4.8 6.6" fill="none" stroke="#111" stroke-width="0.9"/></svg>
<div style="left:0px;top:582px;width:652.3px;height:94.7px;background:#f0f0f0;"></div>
<span class="t" style="top:683.3px;color:#ffffff;font-size:7.6px;line-height:12px;left:-0.5px;">Ready</span>
<svg style="left:4.8px;top:702.9px;" width="11.2" height="10.6" viewBox="0 0 11.2 10.6"><path d="M0 1.5 L5 0.8 V5 H0 Z M5.7 0.7 L11.2 0 V5 H5.7 Z M0 5.7 H5 V9.9 L0 9.2 Z M5.7 5.7 H11.2 V10.6 L5.7 9.9 Z" fill="#fff"/></svg>
<svg style="left:35.5px;top:702.5px;" width="12" height="12" viewBox="0 0 12 12"><circle cx="7.6" cy="4.5" r="3.4" fill="none" stroke="#fff" stroke-width="1"/><path d="M5.1 7 L0.8 11" stroke="#fff" stroke-width="1.1"/></svg>
<svg style="left:66px;top:704px;" width="13" height="9" viewBox="0 0 13 9"><rect x="2.2" y="0.5" width="8.6" height="8" fill="none" stroke="#fff" stroke-width="0.9"/><path d="M2 1.6 H0.5 V7.4 H2 M11 1.6 H12.5 V7.4 H11" fill="none" stroke="#fff" stroke-width="0.8"/></svg>
<svg style="left:97px;top:700px;" width="16" height="16" viewBox="0 0 16 16"><circle cx="8.2" cy="8.6" r="4.5" fill="none" stroke="#5ccaf8" stroke-width="2.5" stroke-dasharray="24.5 3.8" transform="rotate(8 8.2 8.6)"/><rect x="5" y="7.6" width="8.6" height="2" fill="#5ccaf8"/><path d="M2 13.8 Q-1 9.5 4.6 4 Q9.6 0 14 1.8" fill="none" stroke="#f0bf1e" stroke-width="1.3"/></svg>
<svg style="left:130px;top:702.2px;" width="14.5" height="12" viewBox="0 0 14.5 12"><path d="M0 0 H5.5 L6.7 1.3 H14.5 V11.6 H0 Z" fill="#f0c04a"/><rect x="0" y="2.6" width="14.5" height="9" fill="#fbe39c"/><path d="M3 11.6 V7 H11.5 V11.6 H9 V9 H5.5 V11.6 Z" fill="#3fa2ea"/></svg>
<svg style="left:161px;top:700.4px;" width="15.5" height="15.5" viewBox="0 0 15.5 15.5"><circle cx="7.6" cy="8.6" r="6.8" fill="url(#ffg)"/><path d="M8.5 0 Q13.5 2 14.6 7.5 Q12.5 4.5 10 4.2 Q10.5 2 8.5 0 Z" fill="#ffc82a"/><path d="M1.2 4.5 Q2 2.5 3.2 2.4 Q3.2 4 4.6 5 Z" fill="#ff9a20"/><circle cx="7.6" cy="8.2" r="3.2" fill="#7a3fe0"/><circle cx="8.4" cy="7.6" r="1.6" fill="#3a2a9a"/></svg>
<svg style="left:192.5px;top:700.4px;" width="15.5" height="15.5" viewBox="0 0 15.5 15.5"><circle cx="7.7" cy="7.6" r="5.6" fill="none" stroke="#2f4a4c" stroke-width="3.6" stroke-dasharray="2.9 1.5"/><circle cx="7.7" cy="7.6" r="5" fill="#2f4a4c"/><circle cx="7.7" cy="7.6" r="4.1" fill="#f4fbfb"/><path d="M6.2 5.2 L10.2 7.6 L6.2 10 Z" fill="#17979c"/></svg>
<div style="left:224px;top:700.4px;width:15.4px;height:15px;background:#bdbdbd;border:1px solid #d4d4d4;"></div>
<span class="t" style="top:700px;color:#0a0a0a;font-size:8.6px;line-height:12px;left:129px;width:200px;text-align:center;font-weight:bold;">B</span>
<span class="t" style="top:703.6px;color:#0a0a0a;font-size:10px;line-height:12px;left:134.3px;width:200px;text-align:center;font-weight:bold;">R</span>
<svg style="left:256.1px;top:701.5px;" width="15" height="13.4" viewBox="0 0 15 13.4"><path d="M7.5 0.2 L11.5 2.2 L14.8 6.7 L11.5 11.2 L7.5 13.2 L3.5 11.2 L0.2 6.7 L3.5 2.2 Z" fill="#6e181c"/><path d="M7.5 1.6 L11 3.4 L13.2 6.7 L11 10 L7.5 11.8 L4 10 L1.8 6.7 L4 3.4 Z" fill="#cc343a"/><ellipse cx="7.5" cy="6.4" rx="3" ry="3.6" fill="#f06a50"/><path d="M6.3 4 H8.7 L8.2 9 H6.8 Z" fill="#f3a66a"/><path d="M7.5 0.8 L8.8 2.6 H6.2 Z" fill="#f8c878"/><path d="M4.8 10.2 Q7.5 12.4 10.2 10.2" stroke="#5e0e12" stroke-width="0.9" fill="none"/></svg>
<svg style="left:287.65px;top:701.5px;" width="15" height="13.4" viewBox="0 0 15 13.4"><path d="M7.5 0.2 L11.5 2.2 L14.8 6.7 L11.5 11.2 L7.5 13.2 L3.5 11.2 L0.2 6.7 L3.5 2.2 Z" fill="#6e181c"/><path d="M7.5 1.6 L11 3.4 L13.2 6.7 L11 10 L7.5 11.8 L4 10 L1.8 6.7 L4 3.4 Z" fill="#cc343a"/><ellipse cx="7.5" cy="6.4" rx="3" ry="3.6" fill="#f06a50"/><path d="M6.3 4 H8.7 L8.2 9 H6.8 Z" fill="#f3a66a"/><path d="M7.5 0.8 L8.8 2.6 H6.2 Z" fill="#f8c878"/><path d="M4.8 10.2 Q7.5 12.4 10.2 10.2" stroke="#5e0e12" stroke-width="0.9" fill="none"/></svg>
<svg style="left:319.2px;top:701.5px;" width="15" height="13.4" viewBox="0 0 15 13.4"><path d="M7.5 0.2 L11.5 2.2 L14.8 6.7 L11.5 11.2 L7.5 13.2 L3.5 11.2 L0.2 6.7 L3.5 2.2 Z" fill="#6e181c"/><path d="M7.5 1.6 L11 3.4 L13.2 6.7 L11 10 L7.5 11.8 L4 10 L1.8 6.7 L4 3.4 Z" fill="#cc343a"/><ellipse cx="7.5" cy="6.4" rx="3" ry="3.6" fill="#f06a50"/><path d="M6.3 4 H8.7 L8.2 9 H6.8 Z" fill="#f3a66a"/><path d="M7.5 0.8 L8.8 2.6 H6.2 Z" fill="#f8c878"/><path d="M4.8 10.2 Q7.5 12.4 10.2 10.2" stroke="#5e0e12" stroke-width="0.9" fill="none"/></svg>
<svg style="left:350.75px;top:701.5px;" width="15" height="13.4" viewBox="0 0 15 13.4"><path d="M7.5 0.2 L11.5 2.2 L14.8 6.7 L11.5 11.2 L7.5 13.2 L3.5 11.2 L0.2 6.7 L3.5 2.2 Z" fill="#6e181c"/><path d="M7.5 1.6 L11 3.4 L13.2 6.7 L11 10 L7.5 11.8 L4 10 L1.8 6.7 L4 3.4 Z" fill="#cc343a"/><ellipse cx="7.5" cy="6.4" rx="3" ry="3.6" fill="#f06a50"/><path d="M6.3 4 H8.7 L8.2 9 H6.8 Z" fill="#f3a66a"/><path d="M7.5 0.8 L8.8 2.6 H6.2 Z" fill="#f8c878"/><path d="M4.8 10.2 Q7.5 12.4 10.2 10.2" stroke="#5e0e12" stroke-width="0.9" fill="none"/></svg>
<svg style="left:382.3px;top:701.5px;" width="15" height="13.4" viewBox="0 0 15 13.4"><path d="M7.5 0.2 L11.5 2.2 L14.8 6.7 L11.5 11.2 L7.5 13.2 L3.5 11.2 L0.2 6.7 L3.5 2.2 Z" fill="#6e181c"/><path d="M7.5 1.6 L11 3.4 L13.2 6.7 L11 10 L7.5 11.8 L4 10 L1.8 6.7 L4 3.4 Z" fill="#cc343a"/><ellipse cx="7.5" cy="6.4" rx="3" ry="3.6" fill="#f06a50"/><path d="M6.3 4 H8.7 L8.2 9 H6.8 Z" fill="#f3a66a"/><path d="M7.5 0.8 L8.8 2.6 H6.2 Z" fill="#f8c878"/><path d="M4.8 10.2 Q7.5 12.4 10.2 10.2" stroke="#5e0e12" stroke-width="0.9" fill="none"/></svg>
<svg style="left:413.85px;top:701.5px;" width="15" height="13.4" viewBox="0 0 15 13.4"><path d="M7.5 0.2 L11.5 2.2 L14.8 6.7 L11.5 11.2 L7.5 13.2 L3.5 11.2 L0.2 6.7 L3.5 2.2 Z" fill="#6e181c"/><path d="M7.5 1.6 L11 3.4 L13.2 6.7 L11 10 L7.5 11.8 L4 10 L1.8 6.7 L4 3.4 Z" fill="#cc343a"/><ellipse cx="7.5" cy="6.4" rx="3" ry="3.6" fill="#f06a50"/><path d="M6.3 4 H8.7 L8.2 9 H6.8 Z" fill="#f3a66a"/><path d="M7.5 0.8 L8.8 2.6 H6.2 Z" fill="#f8c878"/><path d="M4.8 10.2 Q7.5 12.4 10.2 10.2" stroke="#5e0e12" stroke-width="0.9" fill="none"/></svg>
<svg style="left:446.5px;top:701.5px;" width="15" height="14" viewBox="0 0 15 14"><rect x="0.5" y="1" width="3.6" height="5.2" fill="#f2c228" stroke="#fbe48a" stroke-width="0.5"/><path d="M6.5 1.4 H9.6 V4.4 M1.2 8.2 V11.4 H4.2" stroke="#3d8f3d" stroke-width="1" fill="none" stroke-dasharray="1.6 0.8"/><path d="M5.4 6.4 L12.4 13" stroke="#dcdcdc" stroke-width="1.6"/><path d="M12 6.5 L6 12.6" stroke="#d9a84c" stroke-width="1.4"/><path d="M9.2 5.6 Q11.8 3.6 13.8 6.8" stroke="#ececec" stroke-width="1.8" fill="none"/><circle cx="5.4" cy="6.4" r="1.5" fill="#d4d4d4"/></svg>
<div style="left:186.9px;top:719.4px;width:26.2px;height:1.1px;background:#6aa6dc;"></div>
<div style="left:218.5px;top:719.4px;width:26.2px;height:1.1px;background:#6aa6dc;"></div>
<div style="left:250.1px;top:719.4px;width:26.2px;height:1.1px;background:#6aa6dc;"></div>
<div style="left:281.7px;top:719.4px;width:26.2px;height:1.1px;background:#6aa6dc;"></div>
<div style="left:313.3px;top:719.4px;width:26.2px;height:1.1px;background:#6aa6dc;"></div>
<div style="left:344.9px;top:719.4px;width:26.2px;height:1.1px;background:#6aa6dc;"></div>
<div style="left:376.5px;top:719.4px;width:26.2px;height:1.1px;background:#6aa6dc;"></div>
<div style="left:408.1px;top:719.4px;width:26.2px;height:1.1px;background:#6aa6dc;"></div>
<div style="left:439.7px;top:719.4px;width:26.2px;height:1.1px;background:#6aa6dc;"></div>
<svg style="left:680px;top:705.5px;" width="8" height="5" viewBox="0 0 8 5"><path d="M0.5 4.5 L4 1 L7.5 4.5" fill="none" stroke="#fff" stroke-width="1"/></svg>
<svg style="left:694px;top:703.5px;" width="11" height="10" viewBox="0 0 11 10"><rect x="3" y="1.5" width="7.5" height="5.5" fill="none" stroke="#fff" stroke-width="0.9"/><path d="M5 9 H9 M7 7 V9" stroke="#fff" stroke-width="0.9"/><rect x="0.5" y="0.5" width="3" height="4.5" fill="#05070b" stroke="#fff" stroke-width="0.8"/></svg>
<svg style="left:709.5px;top:704px;" width="11" height="9" viewBox="0 0 11 9"><path d="M0.5 3 H2.5 L5 0.8 V8.2 L2.5 6 H0.5 Z" fill="none" stroke="#fff" stroke-width="0.8"/><path d="M6.5 2.8 Q7.8 4.5 6.5 6.2 M8 1.5 Q10.2 4.5 8 7.5" fill="none" stroke="#fff" stroke-width="0.8"/></svg>
<span class="t" style="top:702.8px;color:#ffffff;font-size:6.9px;line-height:12px;left:728.4px;letter-spacing:-0.45px;">ESP</span>
<span class="t" style="top:697px;color:#ffffff;font-size:7.6px;line-height:12px;left:666.5px;width:200px;text-align:center;letter-spacing:-0.1px;">6:06 PM</span>
<span class="t" style="top:708.8px;color:#ffffff;font-size:7.6px;line-height:12px;left:666.5px;width:200px;text-align:center;letter-spacing:-0.1px;">2/16/2024</span>
<svg style="left:794.5px;top:703.5px;" width="8" height="10" viewBox="0 0 8 10"><path d="M0.5 0.5 H8 V7 H4 L2 9 V7 H0.5 Z" fill="none" stroke="#fff" stroke-width="0.9"/></svg>
</body></html>
